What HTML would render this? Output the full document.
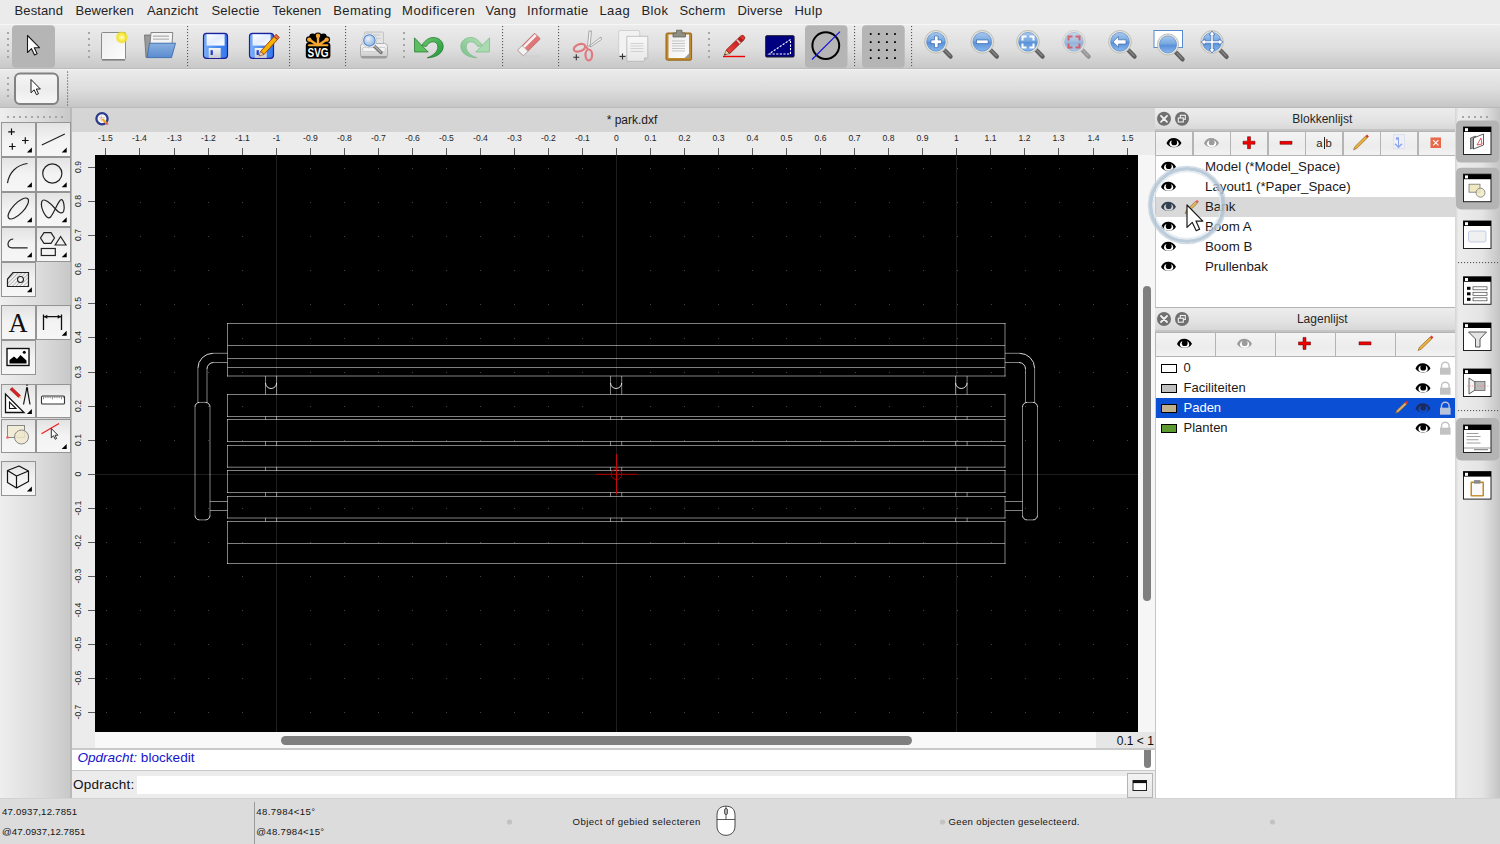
<!DOCTYPE html><html><head><meta charset="utf-8"><title>LibreCAD</title><style>
*{box-sizing:border-box}
html,body{margin:0;padding:0}
body{width:1500px;height:844px;overflow:hidden;position:relative;background:#ebebeb;font-family:"Liberation Sans",sans-serif;color:#1e1e1e}
.a{position:absolute}
.t{position:absolute;white-space:nowrap}
.menu{font-size:13px;color:#242424;top:2.8px;line-height:16px}
.rl{position:absolute;font-size:8.6px;color:#262626;white-space:nowrap;line-height:10px;text-align:center;width:30px}
.rv{position:absolute;font-size:8.6px;color:#262626;white-space:nowrap;line-height:10px;text-align:center;width:30px;transform:rotate(-90deg)}
.st{position:absolute;font-size:9.6px;color:#151515;white-space:nowrap;line-height:12px;letter-spacing:0.3px}
.row{position:absolute;font-size:13px;line-height:16px;white-space:nowrap;color:#1a1a1a}
</style></head><body>
<div class="a" style="left:0;top:0;width:1500px;height:24px;background:#ebebeb"></div>
<div class="t menu" style="left:14.6px;letter-spacing:0.1px">Bestand</div>
<div class="t menu" style="left:75.6px;letter-spacing:0.06px">Bewerken</div>
<div class="t menu" style="left:147.0px;letter-spacing:0.19px">Aanzicht</div>
<div class="t menu" style="left:211.4px;letter-spacing:0.26px">Selectie</div>
<div class="t menu" style="left:272.2px;letter-spacing:0px">Tekenen</div>
<div class="t menu" style="left:333.2px;letter-spacing:0.43px">Bemating</div>
<div class="t menu" style="left:402.0px;letter-spacing:0.55px">Modificeren</div>
<div class="t menu" style="left:485.4px;letter-spacing:0.37px">Vang</div>
<div class="t menu" style="left:527.1px;letter-spacing:0.38px">Informatie</div>
<div class="t menu" style="left:599.4px;letter-spacing:0.5px">Laag</div>
<div class="t menu" style="left:641.4px;letter-spacing:0.4px">Blok</div>
<div class="t menu" style="left:679.5px;letter-spacing:0.2px">Scherm</div>
<div class="t menu" style="left:737.4px;letter-spacing:0.18px">Diverse</div>
<div class="t menu" style="left:794.4px;letter-spacing:0.33px">Hulp</div>
<div class="a" style="left:0;top:24px;width:1500px;height:1px;background:#f6f6f6"></div>
<div class="a" style="left:0;top:25px;width:1500px;height:43px;background:linear-gradient(#ececec,#dedede 55%,#c8c8c8)"></div>
<div class="a" style="left:0;top:67.6px;width:1500px;height:1px;background:#bcbcbc"></div>
<div class="a" style="left:0;top:68.6px;width:1500px;height:1px;background:#f2f2f2"></div>
<div class="a" style="left:0;top:69.6px;width:1500px;height:37px;background:linear-gradient(#ebebeb,#dcdcdc 55%,#c6c6c6)"></div>
<div class="a" style="left:0;top:106.5px;width:1500px;height:1.5px;background:#b9b9b9"></div>
<div class="a" style="left:0;top:108px;width:71px;height:690px;background:linear-gradient(90deg,#eeeeee,#dadada 60%,#c8c8c8)"></div>
<div class="a" style="left:70px;top:108px;width:2px;height:690px;background:#b9b9b9"></div>
<div class="a" style="left:1.4px;top:121.9px;width:34.6px;height:34.8px;border:1.4px solid #949494;background:linear-gradient(#e3e3e3,#f3f3f3 50%,#f6f6f6)"></div>
<div class="a" style="left:36.2px;top:121.9px;width:34.6px;height:34.8px;border:1.4px solid #949494;background:linear-gradient(#e3e3e3,#f3f3f3 50%,#f6f6f6)"></div>
<div class="a" style="left:1.4px;top:156.8px;width:34.6px;height:34.8px;border:1.4px solid #949494;background:linear-gradient(#e3e3e3,#f3f3f3 50%,#f6f6f6)"></div>
<div class="a" style="left:36.2px;top:156.8px;width:34.6px;height:34.8px;border:1.4px solid #949494;background:linear-gradient(#e3e3e3,#f3f3f3 50%,#f6f6f6)"></div>
<div class="a" style="left:1.4px;top:191.8px;width:34.6px;height:34.8px;border:1.4px solid #949494;background:linear-gradient(#e3e3e3,#f3f3f3 50%,#f6f6f6)"></div>
<div class="a" style="left:36.2px;top:191.8px;width:34.6px;height:34.8px;border:1.4px solid #949494;background:linear-gradient(#e3e3e3,#f3f3f3 50%,#f6f6f6)"></div>
<div class="a" style="left:1.4px;top:226.8px;width:34.6px;height:34.8px;border:1.4px solid #949494;background:linear-gradient(#e3e3e3,#f3f3f3 50%,#f6f6f6)"></div>
<div class="a" style="left:36.2px;top:226.8px;width:34.6px;height:34.8px;border:1.4px solid #949494;background:linear-gradient(#e3e3e3,#f3f3f3 50%,#f6f6f6)"></div>
<div class="a" style="left:1.4px;top:261.8px;width:34.6px;height:34.8px;border:1.4px solid #949494;background:linear-gradient(#e3e3e3,#f3f3f3 50%,#f6f6f6)"></div>
<div class="a" style="left:1.4px;top:305.2px;width:34.6px;height:34.8px;border:1.4px solid #949494;background:linear-gradient(#e3e3e3,#f3f3f3 50%,#f6f6f6)"></div>
<div class="a" style="left:36.2px;top:305.2px;width:34.6px;height:34.8px;border:1.4px solid #949494;background:linear-gradient(#e3e3e3,#f3f3f3 50%,#f6f6f6)"></div>
<div class="a" style="left:1.4px;top:340.2px;width:34.6px;height:34.8px;border:1.4px solid #949494;background:linear-gradient(#e3e3e3,#f3f3f3 50%,#f6f6f6)"></div>
<div class="a" style="left:1.4px;top:383.5px;width:34.6px;height:34.8px;border:1.4px solid #949494;background:linear-gradient(#e3e3e3,#f3f3f3 50%,#f6f6f6)"></div>
<div class="a" style="left:36.2px;top:383.5px;width:34.6px;height:34.8px;border:1.4px solid #949494;background:linear-gradient(#e3e3e3,#f3f3f3 50%,#f6f6f6)"></div>
<div class="a" style="left:1.4px;top:418.5px;width:34.6px;height:34.8px;border:1.4px solid #949494;background:linear-gradient(#e3e3e3,#f3f3f3 50%,#f6f6f6)"></div>
<div class="a" style="left:36.2px;top:418.5px;width:34.6px;height:34.8px;border:1.4px solid #949494;background:linear-gradient(#e3e3e3,#f3f3f3 50%,#f6f6f6)"></div>
<div class="a" style="left:1.4px;top:461.1px;width:34.6px;height:34.8px;border:1.4px solid #949494;background:linear-gradient(#e3e3e3,#f3f3f3 50%,#f6f6f6)"></div>
<div class="a" style="left:72px;top:108px;width:1083px;height:24px;background:#d5d5d5"></div>
<div class="t" style="left:606.7px;top:112.5px;font-size:12px;line-height:14px;color:#1a1a1a">* park.dxf</div>
<div class="a" style="left:72px;top:132px;width:1083px;height:23px;background:#ececec"></div>
<div class="a" style="left:72px;top:155px;width:23px;height:592px;background:#ececec"></div>
<div class="a" style="left:95px;top:155px;width:1043px;height:577px;background:#000"></div>
<div class="a" style="left:1138px;top:155px;width:17px;height:577px;background:#f6f6f6"></div>
<div class="a" style="left:1143.3px;top:285.5px;width:7.6px;height:315px;border-radius:4px;background:#7f7f7f"></div>
<div class="a" style="left:95px;top:732px;width:1001px;height:16px;background:#f8f8f8"></div>
<div class="a" style="left:280.5px;top:735.5px;width:631px;height:9px;border-radius:5px;background:#7f7f7f"></div>
<div class="a" style="left:1096px;top:732px;width:59px;height:16px;background:#e6e6e6"></div>
<div class="t" style="left:1116.8px;top:734px;font-size:12px;line-height:15px;color:#111">0.1 &lt; 1</div>
<div class="a" style="left:72px;top:748px;width:1083px;height:2px;background:#c9c9c9"></div>
<div class="a" style="left:72px;top:750px;width:1083px;height:20px;background:#fff"></div>
<div class="a" style="left:72px;top:770px;width:1083px;height:1.2px;background:#c9c9c9"></div>
<div class="t" style="left:77.4px;top:750.3px;font-size:13.6px;line-height:16px;color:#1414cc"><i>Opdracht:</i> blockedit</div>
<div class="a" style="left:1144px;top:750px;width:7px;height:17.5px;border-radius:0 0 4px 4px;background:#808080"></div>
<div class="a" style="left:72px;top:771px;width:1083px;height:27px;background:#ececec"></div>
<div class="t" style="left:73px;top:777.3px;font-size:13.5px;line-height:16px;color:#111;letter-spacing:0.25px">Opdracht:</div>
<div class="a" style="left:137px;top:776px;width:991px;height:18px;background:#fff"></div>
<div class="a" style="left:1127px;top:772.5px;width:25.5px;height:25px;border:1px solid #b4b4b4;background:linear-gradient(#f4f4f4,#e6e6e6)"></div>
<div class="a" style="left:1154.8px;top:108px;width:1.2px;height:690px;background:#c6c6c6"></div>
<div class="a" style="left:1155px;top:108px;width:300px;height:22.5px;background:linear-gradient(#ededed,#e2e2e2 60%,#d6d6d6)"></div>
<div class="a" style="left:1155px;top:129.0px;width:300px;height:1.5px;background:#c4c4c4"></div>
<div class="t" style="left:1262.3px;width:120px;text-align:center;top:111.9px;font-size:12px;line-height:14px;color:#262626">Blokkenlijst</div>
<div class="a" style="left:1155px;top:130.5px;width:300px;height:25.5px;background:#b4b4b4"></div>
<div class="a" style="left:1156.20px;top:131.9px;width:35.90px;height:22.70px;background:linear-gradient(#f4f4f4,#ececec 60%,#f2f2f2)"></div>
<div class="a" style="left:1193.70px;top:131.9px;width:35.90px;height:22.70px;background:linear-gradient(#f4f4f4,#ececec 60%,#f2f2f2)"></div>
<div class="a" style="left:1231.20px;top:131.9px;width:35.90px;height:22.70px;background:linear-gradient(#f4f4f4,#ececec 60%,#f2f2f2)"></div>
<div class="a" style="left:1268.70px;top:131.9px;width:35.90px;height:22.70px;background:linear-gradient(#f4f4f4,#ececec 60%,#f2f2f2)"></div>
<div class="a" style="left:1306.20px;top:131.9px;width:35.90px;height:22.70px;background:linear-gradient(#f4f4f4,#ececec 60%,#f2f2f2)"></div>
<div class="a" style="left:1343.70px;top:131.9px;width:35.90px;height:22.70px;background:linear-gradient(#f4f4f4,#ececec 60%,#f2f2f2)"></div>
<div class="a" style="left:1381.20px;top:131.9px;width:35.90px;height:22.70px;background:linear-gradient(#f4f4f4,#ececec 60%,#f2f2f2)"></div>
<div class="a" style="left:1418.70px;top:131.9px;width:35.90px;height:22.70px;background:linear-gradient(#f4f4f4,#ececec 60%,#f2f2f2)"></div>
<div class="a" style="left:1156px;top:156px;width:299px;height:151px;background:#fff"></div>
<div class="t" style="left:1316.3px;top:136.1px;font-size:11.3px;line-height:14px;color:#222">a<span style="display:inline-block;width:1px;height:12px;background:#222;margin:0 1px;vertical-align:-2px"></span>b</div>
<div class="a" style="left:1155.5px;top:196.8px;width:299px;height:19.8px;background:#d9d9d9"></div>
<div class="row" style="left:1205px;top:158.9px;font-size:13.3px">Model (*Model_Space)</div>
<div class="row" style="left:1205px;top:178.9px;font-size:13.3px">Layout1 (*Paper_Space)</div>
<div class="row" style="left:1205px;top:198.9px;font-size:13.3px">Bank</div>
<div class="row" style="left:1205px;top:218.9px;font-size:13.3px">Boom A</div>
<div class="row" style="left:1205px;top:238.9px;font-size:13.3px">Boom B</div>
<div class="row" style="left:1205px;top:258.9px;font-size:13.3px">Prullenbak</div>
<div class="a" style="left:1155px;top:306.8px;width:300px;height:1.4px;background:#b4b4b4"></div>
<div class="a" style="left:1155px;top:308.2px;width:300px;height:23.3px;background:linear-gradient(#ededed,#e2e2e2 60%,#d6d6d6)"></div>
<div class="a" style="left:1155px;top:330.0px;width:300px;height:1.5px;background:#c4c4c4"></div>
<div class="t" style="left:1262.3px;width:120px;text-align:center;top:312.09999999999997px;font-size:12px;line-height:14px;color:#262626">Lagenlijst</div>
<div class="a" style="left:1155px;top:331.5px;width:300px;height:25.5px;background:#b4b4b4"></div>
<div class="a" style="left:1156.20px;top:332.9px;width:58.40px;height:22.70px;background:linear-gradient(#f4f4f4,#ececec 60%,#f2f2f2)"></div>
<div class="a" style="left:1216.20px;top:332.9px;width:58.40px;height:22.70px;background:linear-gradient(#f4f4f4,#ececec 60%,#f2f2f2)"></div>
<div class="a" style="left:1276.20px;top:332.9px;width:58.40px;height:22.70px;background:linear-gradient(#f4f4f4,#ececec 60%,#f2f2f2)"></div>
<div class="a" style="left:1336.20px;top:332.9px;width:58.40px;height:22.70px;background:linear-gradient(#f4f4f4,#ececec 60%,#f2f2f2)"></div>
<div class="a" style="left:1396.20px;top:332.9px;width:58.40px;height:22.70px;background:linear-gradient(#f4f4f4,#ececec 60%,#f2f2f2)"></div>
<div class="a" style="left:1156px;top:357px;width:299px;height:441px;background:#fff"></div>
<div class="a" style="left:1155.5px;top:398px;width:299px;height:19.8px;background:#0b4fd5"></div>
<div class="row" style="left:1183.5px;top:359.5px;color:#1a1a1a">0</div>
<div class="row" style="left:1183.5px;top:379.5px;color:#1a1a1a">Faciliteiten</div>
<div class="row" style="left:1183.5px;top:399.5px;color:#fff">Paden</div>
<div class="row" style="left:1183.5px;top:419.5px;color:#1a1a1a">Planten</div>
<div class="a" style="left:1455px;top:108px;width:45px;height:690px;background:linear-gradient(90deg,#d4d4d4,#ececec 8%,#e4e4e4 60%,#c4c4c4)"></div>
<div class="a" style="left:0;top:798px;width:1500px;height:46px;background:#dcdcdc"></div>
<div class="a" style="left:0;top:797.5px;width:1500px;height:1px;background:#d2d2d2"></div>
<div class="st" style="left:2px;top:805.6px;letter-spacing:0.22px">47.0937,12.7851</div>
<div class="st" style="left:2px;top:825.6px;letter-spacing:0.1px">@47.0937,12.7851</div>
<div class="a" style="left:253.5px;top:802px;width:1px;height:42px;background:#9a9a9a"></div>
<div class="st" style="left:256.3px;top:805.6px;letter-spacing:0.4px">48.7984&lt;15°</div>
<div class="st" style="left:256.3px;top:825.6px;letter-spacing:0.3px">@48.7984&lt;15°</div>
<div class="st" style="left:572.5px;top:816.3px;letter-spacing:0.42px">Object of gebied selecteren</div>
<div class="st" style="left:948.5px;top:816.3px;letter-spacing:0.32px">Geen objecten geselecteerd.</div>
<svg class="a" style="left:0;top:0" width="1500" height="844" viewBox="0 0 1500 844"><g><rect x="106" y="712" width="1" height="1" fill="#464646"/><rect x="106" y="678" width="1" height="1" fill="#464646"/><rect x="106" y="644" width="1" height="1" fill="#464646"/><rect x="106" y="610" width="1" height="1" fill="#464646"/><rect x="106" y="576" width="1" height="1" fill="#464646"/><rect x="106" y="542" width="1" height="1" fill="#464646"/><rect x="106" y="508" width="1" height="1" fill="#464646"/><rect x="106" y="474" width="1" height="1" fill="#464646"/><rect x="106" y="440" width="1" height="1" fill="#464646"/><rect x="106" y="406" width="1" height="1" fill="#464646"/><rect x="106" y="372" width="1" height="1" fill="#464646"/><rect x="106" y="338" width="1" height="1" fill="#464646"/><rect x="106" y="304" width="1" height="1" fill="#464646"/><rect x="106" y="270" width="1" height="1" fill="#464646"/><rect x="106" y="236" width="1" height="1" fill="#464646"/><rect x="106" y="202" width="1" height="1" fill="#464646"/><rect x="106" y="168" width="1" height="1" fill="#464646"/><rect x="140" y="712" width="1" height="1" fill="#464646"/><rect x="140" y="678" width="1" height="1" fill="#464646"/><rect x="140" y="644" width="1" height="1" fill="#464646"/><rect x="140" y="610" width="1" height="1" fill="#464646"/><rect x="140" y="576" width="1" height="1" fill="#464646"/><rect x="140" y="542" width="1" height="1" fill="#464646"/><rect x="140" y="508" width="1" height="1" fill="#464646"/><rect x="140" y="474" width="1" height="1" fill="#464646"/><rect x="140" y="440" width="1" height="1" fill="#464646"/><rect x="140" y="406" width="1" height="1" fill="#464646"/><rect x="140" y="372" width="1" height="1" fill="#464646"/><rect x="140" y="338" width="1" height="1" fill="#464646"/><rect x="140" y="304" width="1" height="1" fill="#464646"/><rect x="140" y="270" width="1" height="1" fill="#464646"/><rect x="140" y="236" width="1" height="1" fill="#464646"/><rect x="140" y="202" width="1" height="1" fill="#464646"/><rect x="140" y="168" width="1" height="1" fill="#464646"/><rect x="174" y="712" width="1" height="1" fill="#464646"/><rect x="174" y="678" width="1" height="1" fill="#464646"/><rect x="174" y="644" width="1" height="1" fill="#464646"/><rect x="174" y="610" width="1" height="1" fill="#464646"/><rect x="174" y="576" width="1" height="1" fill="#464646"/><rect x="174" y="542" width="1" height="1" fill="#464646"/><rect x="174" y="508" width="1" height="1" fill="#464646"/><rect x="174" y="474" width="1" height="1" fill="#464646"/><rect x="174" y="440" width="1" height="1" fill="#464646"/><rect x="174" y="406" width="1" height="1" fill="#464646"/><rect x="174" y="372" width="1" height="1" fill="#464646"/><rect x="174" y="338" width="1" height="1" fill="#464646"/><rect x="174" y="304" width="1" height="1" fill="#464646"/><rect x="174" y="270" width="1" height="1" fill="#464646"/><rect x="174" y="236" width="1" height="1" fill="#464646"/><rect x="174" y="202" width="1" height="1" fill="#464646"/><rect x="174" y="168" width="1" height="1" fill="#464646"/><rect x="208" y="712" width="1" height="1" fill="#464646"/><rect x="208" y="678" width="1" height="1" fill="#464646"/><rect x="208" y="644" width="1" height="1" fill="#464646"/><rect x="208" y="610" width="1" height="1" fill="#464646"/><rect x="208" y="576" width="1" height="1" fill="#464646"/><rect x="208" y="542" width="1" height="1" fill="#464646"/><rect x="208" y="508" width="1" height="1" fill="#464646"/><rect x="208" y="474" width="1" height="1" fill="#464646"/><rect x="208" y="440" width="1" height="1" fill="#464646"/><rect x="208" y="406" width="1" height="1" fill="#464646"/><rect x="208" y="372" width="1" height="1" fill="#464646"/><rect x="208" y="338" width="1" height="1" fill="#464646"/><rect x="208" y="304" width="1" height="1" fill="#464646"/><rect x="208" y="270" width="1" height="1" fill="#464646"/><rect x="208" y="236" width="1" height="1" fill="#464646"/><rect x="208" y="202" width="1" height="1" fill="#464646"/><rect x="208" y="168" width="1" height="1" fill="#464646"/><rect x="242" y="712" width="1" height="1" fill="#464646"/><rect x="242" y="678" width="1" height="1" fill="#464646"/><rect x="242" y="644" width="1" height="1" fill="#464646"/><rect x="242" y="610" width="1" height="1" fill="#464646"/><rect x="242" y="576" width="1" height="1" fill="#464646"/><rect x="242" y="542" width="1" height="1" fill="#464646"/><rect x="242" y="508" width="1" height="1" fill="#464646"/><rect x="242" y="474" width="1" height="1" fill="#464646"/><rect x="242" y="440" width="1" height="1" fill="#464646"/><rect x="242" y="406" width="1" height="1" fill="#464646"/><rect x="242" y="372" width="1" height="1" fill="#464646"/><rect x="242" y="338" width="1" height="1" fill="#464646"/><rect x="242" y="304" width="1" height="1" fill="#464646"/><rect x="242" y="270" width="1" height="1" fill="#464646"/><rect x="242" y="236" width="1" height="1" fill="#464646"/><rect x="242" y="202" width="1" height="1" fill="#464646"/><rect x="242" y="168" width="1" height="1" fill="#464646"/><rect x="276" y="712" width="1" height="1" fill="#464646"/><rect x="276" y="678" width="1" height="1" fill="#464646"/><rect x="276" y="644" width="1" height="1" fill="#464646"/><rect x="276" y="610" width="1" height="1" fill="#464646"/><rect x="276" y="576" width="1" height="1" fill="#464646"/><rect x="276" y="542" width="1" height="1" fill="#464646"/><rect x="276" y="508" width="1" height="1" fill="#464646"/><rect x="276" y="474" width="1" height="1" fill="#464646"/><rect x="276" y="440" width="1" height="1" fill="#464646"/><rect x="276" y="406" width="1" height="1" fill="#464646"/><rect x="276" y="372" width="1" height="1" fill="#464646"/><rect x="276" y="338" width="1" height="1" fill="#464646"/><rect x="276" y="304" width="1" height="1" fill="#464646"/><rect x="276" y="270" width="1" height="1" fill="#464646"/><rect x="276" y="236" width="1" height="1" fill="#464646"/><rect x="276" y="202" width="1" height="1" fill="#464646"/><rect x="276" y="168" width="1" height="1" fill="#464646"/><rect x="310" y="712" width="1" height="1" fill="#464646"/><rect x="310" y="678" width="1" height="1" fill="#464646"/><rect x="310" y="644" width="1" height="1" fill="#464646"/><rect x="310" y="610" width="1" height="1" fill="#464646"/><rect x="310" y="576" width="1" height="1" fill="#464646"/><rect x="310" y="542" width="1" height="1" fill="#464646"/><rect x="310" y="508" width="1" height="1" fill="#464646"/><rect x="310" y="474" width="1" height="1" fill="#464646"/><rect x="310" y="440" width="1" height="1" fill="#464646"/><rect x="310" y="406" width="1" height="1" fill="#464646"/><rect x="310" y="372" width="1" height="1" fill="#464646"/><rect x="310" y="338" width="1" height="1" fill="#464646"/><rect x="310" y="304" width="1" height="1" fill="#464646"/><rect x="310" y="270" width="1" height="1" fill="#464646"/><rect x="310" y="236" width="1" height="1" fill="#464646"/><rect x="310" y="202" width="1" height="1" fill="#464646"/><rect x="310" y="168" width="1" height="1" fill="#464646"/><rect x="344" y="712" width="1" height="1" fill="#464646"/><rect x="344" y="678" width="1" height="1" fill="#464646"/><rect x="344" y="644" width="1" height="1" fill="#464646"/><rect x="344" y="610" width="1" height="1" fill="#464646"/><rect x="344" y="576" width="1" height="1" fill="#464646"/><rect x="344" y="542" width="1" height="1" fill="#464646"/><rect x="344" y="508" width="1" height="1" fill="#464646"/><rect x="344" y="474" width="1" height="1" fill="#464646"/><rect x="344" y="440" width="1" height="1" fill="#464646"/><rect x="344" y="406" width="1" height="1" fill="#464646"/><rect x="344" y="372" width="1" height="1" fill="#464646"/><rect x="344" y="338" width="1" height="1" fill="#464646"/><rect x="344" y="304" width="1" height="1" fill="#464646"/><rect x="344" y="270" width="1" height="1" fill="#464646"/><rect x="344" y="236" width="1" height="1" fill="#464646"/><rect x="344" y="202" width="1" height="1" fill="#464646"/><rect x="344" y="168" width="1" height="1" fill="#464646"/><rect x="378" y="712" width="1" height="1" fill="#464646"/><rect x="378" y="678" width="1" height="1" fill="#464646"/><rect x="378" y="644" width="1" height="1" fill="#464646"/><rect x="378" y="610" width="1" height="1" fill="#464646"/><rect x="378" y="576" width="1" height="1" fill="#464646"/><rect x="378" y="542" width="1" height="1" fill="#464646"/><rect x="378" y="508" width="1" height="1" fill="#464646"/><rect x="378" y="474" width="1" height="1" fill="#464646"/><rect x="378" y="440" width="1" height="1" fill="#464646"/><rect x="378" y="406" width="1" height="1" fill="#464646"/><rect x="378" y="372" width="1" height="1" fill="#464646"/><rect x="378" y="338" width="1" height="1" fill="#464646"/><rect x="378" y="304" width="1" height="1" fill="#464646"/><rect x="378" y="270" width="1" height="1" fill="#464646"/><rect x="378" y="236" width="1" height="1" fill="#464646"/><rect x="378" y="202" width="1" height="1" fill="#464646"/><rect x="378" y="168" width="1" height="1" fill="#464646"/><rect x="412" y="712" width="1" height="1" fill="#464646"/><rect x="412" y="678" width="1" height="1" fill="#464646"/><rect x="412" y="644" width="1" height="1" fill="#464646"/><rect x="412" y="610" width="1" height="1" fill="#464646"/><rect x="412" y="576" width="1" height="1" fill="#464646"/><rect x="412" y="542" width="1" height="1" fill="#464646"/><rect x="412" y="508" width="1" height="1" fill="#464646"/><rect x="412" y="474" width="1" height="1" fill="#464646"/><rect x="412" y="440" width="1" height="1" fill="#464646"/><rect x="412" y="406" width="1" height="1" fill="#464646"/><rect x="412" y="372" width="1" height="1" fill="#464646"/><rect x="412" y="338" width="1" height="1" fill="#464646"/><rect x="412" y="304" width="1" height="1" fill="#464646"/><rect x="412" y="270" width="1" height="1" fill="#464646"/><rect x="412" y="236" width="1" height="1" fill="#464646"/><rect x="412" y="202" width="1" height="1" fill="#464646"/><rect x="412" y="168" width="1" height="1" fill="#464646"/><rect x="446" y="712" width="1" height="1" fill="#464646"/><rect x="446" y="678" width="1" height="1" fill="#464646"/><rect x="446" y="644" width="1" height="1" fill="#464646"/><rect x="446" y="610" width="1" height="1" fill="#464646"/><rect x="446" y="576" width="1" height="1" fill="#464646"/><rect x="446" y="542" width="1" height="1" fill="#464646"/><rect x="446" y="508" width="1" height="1" fill="#464646"/><rect x="446" y="474" width="1" height="1" fill="#464646"/><rect x="446" y="440" width="1" height="1" fill="#464646"/><rect x="446" y="406" width="1" height="1" fill="#464646"/><rect x="446" y="372" width="1" height="1" fill="#464646"/><rect x="446" y="338" width="1" height="1" fill="#464646"/><rect x="446" y="304" width="1" height="1" fill="#464646"/><rect x="446" y="270" width="1" height="1" fill="#464646"/><rect x="446" y="236" width="1" height="1" fill="#464646"/><rect x="446" y="202" width="1" height="1" fill="#464646"/><rect x="446" y="168" width="1" height="1" fill="#464646"/><rect x="480" y="712" width="1" height="1" fill="#464646"/><rect x="480" y="678" width="1" height="1" fill="#464646"/><rect x="480" y="644" width="1" height="1" fill="#464646"/><rect x="480" y="610" width="1" height="1" fill="#464646"/><rect x="480" y="576" width="1" height="1" fill="#464646"/><rect x="480" y="542" width="1" height="1" fill="#464646"/><rect x="480" y="508" width="1" height="1" fill="#464646"/><rect x="480" y="474" width="1" height="1" fill="#464646"/><rect x="480" y="440" width="1" height="1" fill="#464646"/><rect x="480" y="406" width="1" height="1" fill="#464646"/><rect x="480" y="372" width="1" height="1" fill="#464646"/><rect x="480" y="338" width="1" height="1" fill="#464646"/><rect x="480" y="304" width="1" height="1" fill="#464646"/><rect x="480" y="270" width="1" height="1" fill="#464646"/><rect x="480" y="236" width="1" height="1" fill="#464646"/><rect x="480" y="202" width="1" height="1" fill="#464646"/><rect x="480" y="168" width="1" height="1" fill="#464646"/><rect x="514" y="712" width="1" height="1" fill="#464646"/><rect x="514" y="678" width="1" height="1" fill="#464646"/><rect x="514" y="644" width="1" height="1" fill="#464646"/><rect x="514" y="610" width="1" height="1" fill="#464646"/><rect x="514" y="576" width="1" height="1" fill="#464646"/><rect x="514" y="542" width="1" height="1" fill="#464646"/><rect x="514" y="508" width="1" height="1" fill="#464646"/><rect x="514" y="474" width="1" height="1" fill="#464646"/><rect x="514" y="440" width="1" height="1" fill="#464646"/><rect x="514" y="406" width="1" height="1" fill="#464646"/><rect x="514" y="372" width="1" height="1" fill="#464646"/><rect x="514" y="338" width="1" height="1" fill="#464646"/><rect x="514" y="304" width="1" height="1" fill="#464646"/><rect x="514" y="270" width="1" height="1" fill="#464646"/><rect x="514" y="236" width="1" height="1" fill="#464646"/><rect x="514" y="202" width="1" height="1" fill="#464646"/><rect x="514" y="168" width="1" height="1" fill="#464646"/><rect x="548" y="712" width="1" height="1" fill="#464646"/><rect x="548" y="678" width="1" height="1" fill="#464646"/><rect x="548" y="644" width="1" height="1" fill="#464646"/><rect x="548" y="610" width="1" height="1" fill="#464646"/><rect x="548" y="576" width="1" height="1" fill="#464646"/><rect x="548" y="542" width="1" height="1" fill="#464646"/><rect x="548" y="508" width="1" height="1" fill="#464646"/><rect x="548" y="474" width="1" height="1" fill="#464646"/><rect x="548" y="440" width="1" height="1" fill="#464646"/><rect x="548" y="406" width="1" height="1" fill="#464646"/><rect x="548" y="372" width="1" height="1" fill="#464646"/><rect x="548" y="338" width="1" height="1" fill="#464646"/><rect x="548" y="304" width="1" height="1" fill="#464646"/><rect x="548" y="270" width="1" height="1" fill="#464646"/><rect x="548" y="236" width="1" height="1" fill="#464646"/><rect x="548" y="202" width="1" height="1" fill="#464646"/><rect x="548" y="168" width="1" height="1" fill="#464646"/><rect x="582" y="712" width="1" height="1" fill="#464646"/><rect x="582" y="678" width="1" height="1" fill="#464646"/><rect x="582" y="644" width="1" height="1" fill="#464646"/><rect x="582" y="610" width="1" height="1" fill="#464646"/><rect x="582" y="576" width="1" height="1" fill="#464646"/><rect x="582" y="542" width="1" height="1" fill="#464646"/><rect x="582" y="508" width="1" height="1" fill="#464646"/><rect x="582" y="474" width="1" height="1" fill="#464646"/><rect x="582" y="440" width="1" height="1" fill="#464646"/><rect x="582" y="406" width="1" height="1" fill="#464646"/><rect x="582" y="372" width="1" height="1" fill="#464646"/><rect x="582" y="338" width="1" height="1" fill="#464646"/><rect x="582" y="304" width="1" height="1" fill="#464646"/><rect x="582" y="270" width="1" height="1" fill="#464646"/><rect x="582" y="236" width="1" height="1" fill="#464646"/><rect x="582" y="202" width="1" height="1" fill="#464646"/><rect x="582" y="168" width="1" height="1" fill="#464646"/><rect x="616" y="712" width="1" height="1" fill="#464646"/><rect x="616" y="678" width="1" height="1" fill="#464646"/><rect x="616" y="644" width="1" height="1" fill="#464646"/><rect x="616" y="610" width="1" height="1" fill="#464646"/><rect x="616" y="576" width="1" height="1" fill="#464646"/><rect x="616" y="542" width="1" height="1" fill="#464646"/><rect x="616" y="508" width="1" height="1" fill="#464646"/><rect x="616" y="474" width="1" height="1" fill="#464646"/><rect x="616" y="440" width="1" height="1" fill="#464646"/><rect x="616" y="406" width="1" height="1" fill="#464646"/><rect x="616" y="372" width="1" height="1" fill="#464646"/><rect x="616" y="338" width="1" height="1" fill="#464646"/><rect x="616" y="304" width="1" height="1" fill="#464646"/><rect x="616" y="270" width="1" height="1" fill="#464646"/><rect x="616" y="236" width="1" height="1" fill="#464646"/><rect x="616" y="202" width="1" height="1" fill="#464646"/><rect x="616" y="168" width="1" height="1" fill="#464646"/><rect x="650" y="712" width="1" height="1" fill="#464646"/><rect x="650" y="678" width="1" height="1" fill="#464646"/><rect x="650" y="644" width="1" height="1" fill="#464646"/><rect x="650" y="610" width="1" height="1" fill="#464646"/><rect x="650" y="576" width="1" height="1" fill="#464646"/><rect x="650" y="542" width="1" height="1" fill="#464646"/><rect x="650" y="508" width="1" height="1" fill="#464646"/><rect x="650" y="474" width="1" height="1" fill="#464646"/><rect x="650" y="440" width="1" height="1" fill="#464646"/><rect x="650" y="406" width="1" height="1" fill="#464646"/><rect x="650" y="372" width="1" height="1" fill="#464646"/><rect x="650" y="338" width="1" height="1" fill="#464646"/><rect x="650" y="304" width="1" height="1" fill="#464646"/><rect x="650" y="270" width="1" height="1" fill="#464646"/><rect x="650" y="236" width="1" height="1" fill="#464646"/><rect x="650" y="202" width="1" height="1" fill="#464646"/><rect x="650" y="168" width="1" height="1" fill="#464646"/><rect x="684" y="712" width="1" height="1" fill="#464646"/><rect x="684" y="678" width="1" height="1" fill="#464646"/><rect x="684" y="644" width="1" height="1" fill="#464646"/><rect x="684" y="610" width="1" height="1" fill="#464646"/><rect x="684" y="576" width="1" height="1" fill="#464646"/><rect x="684" y="542" width="1" height="1" fill="#464646"/><rect x="684" y="508" width="1" height="1" fill="#464646"/><rect x="684" y="474" width="1" height="1" fill="#464646"/><rect x="684" y="440" width="1" height="1" fill="#464646"/><rect x="684" y="406" width="1" height="1" fill="#464646"/><rect x="684" y="372" width="1" height="1" fill="#464646"/><rect x="684" y="338" width="1" height="1" fill="#464646"/><rect x="684" y="304" width="1" height="1" fill="#464646"/><rect x="684" y="270" width="1" height="1" fill="#464646"/><rect x="684" y="236" width="1" height="1" fill="#464646"/><rect x="684" y="202" width="1" height="1" fill="#464646"/><rect x="684" y="168" width="1" height="1" fill="#464646"/><rect x="718" y="712" width="1" height="1" fill="#464646"/><rect x="718" y="678" width="1" height="1" fill="#464646"/><rect x="718" y="644" width="1" height="1" fill="#464646"/><rect x="718" y="610" width="1" height="1" fill="#464646"/><rect x="718" y="576" width="1" height="1" fill="#464646"/><rect x="718" y="542" width="1" height="1" fill="#464646"/><rect x="718" y="508" width="1" height="1" fill="#464646"/><rect x="718" y="474" width="1" height="1" fill="#464646"/><rect x="718" y="440" width="1" height="1" fill="#464646"/><rect x="718" y="406" width="1" height="1" fill="#464646"/><rect x="718" y="372" width="1" height="1" fill="#464646"/><rect x="718" y="338" width="1" height="1" fill="#464646"/><rect x="718" y="304" width="1" height="1" fill="#464646"/><rect x="718" y="270" width="1" height="1" fill="#464646"/><rect x="718" y="236" width="1" height="1" fill="#464646"/><rect x="718" y="202" width="1" height="1" fill="#464646"/><rect x="718" y="168" width="1" height="1" fill="#464646"/><rect x="752" y="712" width="1" height="1" fill="#464646"/><rect x="752" y="678" width="1" height="1" fill="#464646"/><rect x="752" y="644" width="1" height="1" fill="#464646"/><rect x="752" y="610" width="1" height="1" fill="#464646"/><rect x="752" y="576" width="1" height="1" fill="#464646"/><rect x="752" y="542" width="1" height="1" fill="#464646"/><rect x="752" y="508" width="1" height="1" fill="#464646"/><rect x="752" y="474" width="1" height="1" fill="#464646"/><rect x="752" y="440" width="1" height="1" fill="#464646"/><rect x="752" y="406" width="1" height="1" fill="#464646"/><rect x="752" y="372" width="1" height="1" fill="#464646"/><rect x="752" y="338" width="1" height="1" fill="#464646"/><rect x="752" y="304" width="1" height="1" fill="#464646"/><rect x="752" y="270" width="1" height="1" fill="#464646"/><rect x="752" y="236" width="1" height="1" fill="#464646"/><rect x="752" y="202" width="1" height="1" fill="#464646"/><rect x="752" y="168" width="1" height="1" fill="#464646"/><rect x="786" y="712" width="1" height="1" fill="#464646"/><rect x="786" y="678" width="1" height="1" fill="#464646"/><rect x="786" y="644" width="1" height="1" fill="#464646"/><rect x="786" y="610" width="1" height="1" fill="#464646"/><rect x="786" y="576" width="1" height="1" fill="#464646"/><rect x="786" y="542" width="1" height="1" fill="#464646"/><rect x="786" y="508" width="1" height="1" fill="#464646"/><rect x="786" y="474" width="1" height="1" fill="#464646"/><rect x="786" y="440" width="1" height="1" fill="#464646"/><rect x="786" y="406" width="1" height="1" fill="#464646"/><rect x="786" y="372" width="1" height="1" fill="#464646"/><rect x="786" y="338" width="1" height="1" fill="#464646"/><rect x="786" y="304" width="1" height="1" fill="#464646"/><rect x="786" y="270" width="1" height="1" fill="#464646"/><rect x="786" y="236" width="1" height="1" fill="#464646"/><rect x="786" y="202" width="1" height="1" fill="#464646"/><rect x="786" y="168" width="1" height="1" fill="#464646"/><rect x="820" y="712" width="1" height="1" fill="#464646"/><rect x="820" y="678" width="1" height="1" fill="#464646"/><rect x="820" y="644" width="1" height="1" fill="#464646"/><rect x="820" y="610" width="1" height="1" fill="#464646"/><rect x="820" y="576" width="1" height="1" fill="#464646"/><rect x="820" y="542" width="1" height="1" fill="#464646"/><rect x="820" y="508" width="1" height="1" fill="#464646"/><rect x="820" y="474" width="1" height="1" fill="#464646"/><rect x="820" y="440" width="1" height="1" fill="#464646"/><rect x="820" y="406" width="1" height="1" fill="#464646"/><rect x="820" y="372" width="1" height="1" fill="#464646"/><rect x="820" y="338" width="1" height="1" fill="#464646"/><rect x="820" y="304" width="1" height="1" fill="#464646"/><rect x="820" y="270" width="1" height="1" fill="#464646"/><rect x="820" y="236" width="1" height="1" fill="#464646"/><rect x="820" y="202" width="1" height="1" fill="#464646"/><rect x="820" y="168" width="1" height="1" fill="#464646"/><rect x="855" y="712" width="1" height="1" fill="#464646"/><rect x="855" y="678" width="1" height="1" fill="#464646"/><rect x="855" y="644" width="1" height="1" fill="#464646"/><rect x="855" y="610" width="1" height="1" fill="#464646"/><rect x="855" y="576" width="1" height="1" fill="#464646"/><rect x="855" y="542" width="1" height="1" fill="#464646"/><rect x="855" y="508" width="1" height="1" fill="#464646"/><rect x="855" y="474" width="1" height="1" fill="#464646"/><rect x="855" y="440" width="1" height="1" fill="#464646"/><rect x="855" y="406" width="1" height="1" fill="#464646"/><rect x="855" y="372" width="1" height="1" fill="#464646"/><rect x="855" y="338" width="1" height="1" fill="#464646"/><rect x="855" y="304" width="1" height="1" fill="#464646"/><rect x="855" y="270" width="1" height="1" fill="#464646"/><rect x="855" y="236" width="1" height="1" fill="#464646"/><rect x="855" y="202" width="1" height="1" fill="#464646"/><rect x="855" y="168" width="1" height="1" fill="#464646"/><rect x="889" y="712" width="1" height="1" fill="#464646"/><rect x="889" y="678" width="1" height="1" fill="#464646"/><rect x="889" y="644" width="1" height="1" fill="#464646"/><rect x="889" y="610" width="1" height="1" fill="#464646"/><rect x="889" y="576" width="1" height="1" fill="#464646"/><rect x="889" y="542" width="1" height="1" fill="#464646"/><rect x="889" y="508" width="1" height="1" fill="#464646"/><rect x="889" y="474" width="1" height="1" fill="#464646"/><rect x="889" y="440" width="1" height="1" fill="#464646"/><rect x="889" y="406" width="1" height="1" fill="#464646"/><rect x="889" y="372" width="1" height="1" fill="#464646"/><rect x="889" y="338" width="1" height="1" fill="#464646"/><rect x="889" y="304" width="1" height="1" fill="#464646"/><rect x="889" y="270" width="1" height="1" fill="#464646"/><rect x="889" y="236" width="1" height="1" fill="#464646"/><rect x="889" y="202" width="1" height="1" fill="#464646"/><rect x="889" y="168" width="1" height="1" fill="#464646"/><rect x="923" y="712" width="1" height="1" fill="#464646"/><rect x="923" y="678" width="1" height="1" fill="#464646"/><rect x="923" y="644" width="1" height="1" fill="#464646"/><rect x="923" y="610" width="1" height="1" fill="#464646"/><rect x="923" y="576" width="1" height="1" fill="#464646"/><rect x="923" y="542" width="1" height="1" fill="#464646"/><rect x="923" y="508" width="1" height="1" fill="#464646"/><rect x="923" y="474" width="1" height="1" fill="#464646"/><rect x="923" y="440" width="1" height="1" fill="#464646"/><rect x="923" y="406" width="1" height="1" fill="#464646"/><rect x="923" y="372" width="1" height="1" fill="#464646"/><rect x="923" y="338" width="1" height="1" fill="#464646"/><rect x="923" y="304" width="1" height="1" fill="#464646"/><rect x="923" y="270" width="1" height="1" fill="#464646"/><rect x="923" y="236" width="1" height="1" fill="#464646"/><rect x="923" y="202" width="1" height="1" fill="#464646"/><rect x="923" y="168" width="1" height="1" fill="#464646"/><rect x="957" y="712" width="1" height="1" fill="#464646"/><rect x="957" y="678" width="1" height="1" fill="#464646"/><rect x="957" y="644" width="1" height="1" fill="#464646"/><rect x="957" y="610" width="1" height="1" fill="#464646"/><rect x="957" y="576" width="1" height="1" fill="#464646"/><rect x="957" y="542" width="1" height="1" fill="#464646"/><rect x="957" y="508" width="1" height="1" fill="#464646"/><rect x="957" y="474" width="1" height="1" fill="#464646"/><rect x="957" y="440" width="1" height="1" fill="#464646"/><rect x="957" y="406" width="1" height="1" fill="#464646"/><rect x="957" y="372" width="1" height="1" fill="#464646"/><rect x="957" y="338" width="1" height="1" fill="#464646"/><rect x="957" y="304" width="1" height="1" fill="#464646"/><rect x="957" y="270" width="1" height="1" fill="#464646"/><rect x="957" y="236" width="1" height="1" fill="#464646"/><rect x="957" y="202" width="1" height="1" fill="#464646"/><rect x="957" y="168" width="1" height="1" fill="#464646"/><rect x="991" y="712" width="1" height="1" fill="#464646"/><rect x="991" y="678" width="1" height="1" fill="#464646"/><rect x="991" y="644" width="1" height="1" fill="#464646"/><rect x="991" y="610" width="1" height="1" fill="#464646"/><rect x="991" y="576" width="1" height="1" fill="#464646"/><rect x="991" y="542" width="1" height="1" fill="#464646"/><rect x="991" y="508" width="1" height="1" fill="#464646"/><rect x="991" y="474" width="1" height="1" fill="#464646"/><rect x="991" y="440" width="1" height="1" fill="#464646"/><rect x="991" y="406" width="1" height="1" fill="#464646"/><rect x="991" y="372" width="1" height="1" fill="#464646"/><rect x="991" y="338" width="1" height="1" fill="#464646"/><rect x="991" y="304" width="1" height="1" fill="#464646"/><rect x="991" y="270" width="1" height="1" fill="#464646"/><rect x="991" y="236" width="1" height="1" fill="#464646"/><rect x="991" y="202" width="1" height="1" fill="#464646"/><rect x="991" y="168" width="1" height="1" fill="#464646"/><rect x="1025" y="712" width="1" height="1" fill="#464646"/><rect x="1025" y="678" width="1" height="1" fill="#464646"/><rect x="1025" y="644" width="1" height="1" fill="#464646"/><rect x="1025" y="610" width="1" height="1" fill="#464646"/><rect x="1025" y="576" width="1" height="1" fill="#464646"/><rect x="1025" y="542" width="1" height="1" fill="#464646"/><rect x="1025" y="508" width="1" height="1" fill="#464646"/><rect x="1025" y="474" width="1" height="1" fill="#464646"/><rect x="1025" y="440" width="1" height="1" fill="#464646"/><rect x="1025" y="406" width="1" height="1" fill="#464646"/><rect x="1025" y="372" width="1" height="1" fill="#464646"/><rect x="1025" y="338" width="1" height="1" fill="#464646"/><rect x="1025" y="304" width="1" height="1" fill="#464646"/><rect x="1025" y="270" width="1" height="1" fill="#464646"/><rect x="1025" y="236" width="1" height="1" fill="#464646"/><rect x="1025" y="202" width="1" height="1" fill="#464646"/><rect x="1025" y="168" width="1" height="1" fill="#464646"/><rect x="1059" y="712" width="1" height="1" fill="#464646"/><rect x="1059" y="678" width="1" height="1" fill="#464646"/><rect x="1059" y="644" width="1" height="1" fill="#464646"/><rect x="1059" y="610" width="1" height="1" fill="#464646"/><rect x="1059" y="576" width="1" height="1" fill="#464646"/><rect x="1059" y="542" width="1" height="1" fill="#464646"/><rect x="1059" y="508" width="1" height="1" fill="#464646"/><rect x="1059" y="474" width="1" height="1" fill="#464646"/><rect x="1059" y="440" width="1" height="1" fill="#464646"/><rect x="1059" y="406" width="1" height="1" fill="#464646"/><rect x="1059" y="372" width="1" height="1" fill="#464646"/><rect x="1059" y="338" width="1" height="1" fill="#464646"/><rect x="1059" y="304" width="1" height="1" fill="#464646"/><rect x="1059" y="270" width="1" height="1" fill="#464646"/><rect x="1059" y="236" width="1" height="1" fill="#464646"/><rect x="1059" y="202" width="1" height="1" fill="#464646"/><rect x="1059" y="168" width="1" height="1" fill="#464646"/><rect x="1093" y="712" width="1" height="1" fill="#464646"/><rect x="1093" y="678" width="1" height="1" fill="#464646"/><rect x="1093" y="644" width="1" height="1" fill="#464646"/><rect x="1093" y="610" width="1" height="1" fill="#464646"/><rect x="1093" y="576" width="1" height="1" fill="#464646"/><rect x="1093" y="542" width="1" height="1" fill="#464646"/><rect x="1093" y="508" width="1" height="1" fill="#464646"/><rect x="1093" y="474" width="1" height="1" fill="#464646"/><rect x="1093" y="440" width="1" height="1" fill="#464646"/><rect x="1093" y="406" width="1" height="1" fill="#464646"/><rect x="1093" y="372" width="1" height="1" fill="#464646"/><rect x="1093" y="338" width="1" height="1" fill="#464646"/><rect x="1093" y="304" width="1" height="1" fill="#464646"/><rect x="1093" y="270" width="1" height="1" fill="#464646"/><rect x="1093" y="236" width="1" height="1" fill="#464646"/><rect x="1093" y="202" width="1" height="1" fill="#464646"/><rect x="1093" y="168" width="1" height="1" fill="#464646"/><rect x="1127" y="712" width="1" height="1" fill="#464646"/><rect x="1127" y="678" width="1" height="1" fill="#464646"/><rect x="1127" y="644" width="1" height="1" fill="#464646"/><rect x="1127" y="610" width="1" height="1" fill="#464646"/><rect x="1127" y="576" width="1" height="1" fill="#464646"/><rect x="1127" y="542" width="1" height="1" fill="#464646"/><rect x="1127" y="508" width="1" height="1" fill="#464646"/><rect x="1127" y="474" width="1" height="1" fill="#464646"/><rect x="1127" y="440" width="1" height="1" fill="#464646"/><rect x="1127" y="406" width="1" height="1" fill="#464646"/><rect x="1127" y="372" width="1" height="1" fill="#464646"/><rect x="1127" y="338" width="1" height="1" fill="#464646"/><rect x="1127" y="304" width="1" height="1" fill="#464646"/><rect x="1127" y="270" width="1" height="1" fill="#464646"/><rect x="1127" y="236" width="1" height="1" fill="#464646"/><rect x="1127" y="202" width="1" height="1" fill="#464646"/><rect x="1127" y="168" width="1" height="1" fill="#464646"/><line x1="276.5" y1="155" x2="276.5" y2="732" stroke="#1e1e1e" stroke-width="1"/><line x1="616.5" y1="155" x2="616.5" y2="732" stroke="#1e1e1e" stroke-width="1"/><line x1="956.5" y1="155" x2="956.5" y2="732" stroke="#1e1e1e" stroke-width="1"/><line x1="95" y1="474.5" x2="1138" y2="474.5" stroke="#1e1e1e" stroke-width="1"/><line x1="227.0" y1="323.5" x2="1005.5" y2="323.5" stroke="#ffffff" stroke-opacity="0.5" stroke-width="1" fill="none"/><line x1="227.0" y1="376.0" x2="1005.5" y2="376.0" stroke="#ffffff" stroke-opacity="0.5" stroke-width="1" fill="none"/><line x1="227.5" y1="323.0" x2="227.5" y2="376.5" stroke="#ffffff" stroke-opacity="0.5" stroke-width="1" fill="none"/><line x1="1005.0" y1="323.0" x2="1005.0" y2="376.5" stroke="#ffffff" stroke-opacity="0.5" stroke-width="1" fill="none"/><line x1="227.5" y1="345.5" x2="1005.0" y2="345.5" stroke="#ffffff" stroke-opacity="0.5" stroke-width="1" fill="none"/><line x1="227.5" y1="358.5" x2="1005.0" y2="358.5" stroke="#ffffff" stroke-opacity="0.5" stroke-width="1" fill="none"/><line x1="227.5" y1="367.5" x2="1005.0" y2="367.5" stroke="#ffffff" stroke-opacity="0.5" stroke-width="1" fill="none"/><line x1="227.0" y1="394.5" x2="1005.5" y2="394.5" stroke="#ffffff" stroke-opacity="0.5" stroke-width="1" fill="none"/><line x1="227.0" y1="416.5" x2="1005.5" y2="416.5" stroke="#ffffff" stroke-opacity="0.5" stroke-width="1" fill="none"/><line x1="227.5" y1="394.0" x2="227.5" y2="417.0" stroke="#ffffff" stroke-opacity="0.5" stroke-width="1" fill="none"/><line x1="1005.0" y1="394.0" x2="1005.0" y2="417.0" stroke="#ffffff" stroke-opacity="0.5" stroke-width="1" fill="none"/><line x1="227.0" y1="419.5" x2="1005.5" y2="419.5" stroke="#ffffff" stroke-opacity="0.5" stroke-width="1" fill="none"/><line x1="227.0" y1="441.5" x2="1005.5" y2="441.5" stroke="#ffffff" stroke-opacity="0.5" stroke-width="1" fill="none"/><line x1="227.5" y1="419.0" x2="227.5" y2="442.0" stroke="#ffffff" stroke-opacity="0.5" stroke-width="1" fill="none"/><line x1="1005.0" y1="419.0" x2="1005.0" y2="442.0" stroke="#ffffff" stroke-opacity="0.5" stroke-width="1" fill="none"/><line x1="227.0" y1="445.5" x2="1005.5" y2="445.5" stroke="#ffffff" stroke-opacity="0.5" stroke-width="1" fill="none"/><line x1="227.0" y1="467.2" x2="1005.5" y2="467.2" stroke="#ffffff" stroke-opacity="0.5" stroke-width="1" fill="none"/><line x1="227.5" y1="445.0" x2="227.5" y2="467.7" stroke="#ffffff" stroke-opacity="0.5" stroke-width="1" fill="none"/><line x1="1005.0" y1="445.0" x2="1005.0" y2="467.7" stroke="#ffffff" stroke-opacity="0.5" stroke-width="1" fill="none"/><line x1="227.0" y1="470.5" x2="1005.5" y2="470.5" stroke="#ffffff" stroke-opacity="0.5" stroke-width="1" fill="none"/><line x1="227.0" y1="492.5" x2="1005.5" y2="492.5" stroke="#ffffff" stroke-opacity="0.5" stroke-width="1" fill="none"/><line x1="227.5" y1="470.0" x2="227.5" y2="493.0" stroke="#ffffff" stroke-opacity="0.5" stroke-width="1" fill="none"/><line x1="1005.0" y1="470.0" x2="1005.0" y2="493.0" stroke="#ffffff" stroke-opacity="0.5" stroke-width="1" fill="none"/><line x1="227.0" y1="496.5" x2="1005.5" y2="496.5" stroke="#ffffff" stroke-opacity="0.5" stroke-width="1" fill="none"/><line x1="227.0" y1="518.0" x2="1005.5" y2="518.0" stroke="#ffffff" stroke-opacity="0.5" stroke-width="1" fill="none"/><line x1="227.5" y1="496.0" x2="227.5" y2="518.5" stroke="#ffffff" stroke-opacity="0.5" stroke-width="1" fill="none"/><line x1="1005.0" y1="496.0" x2="1005.0" y2="518.5" stroke="#ffffff" stroke-opacity="0.5" stroke-width="1" fill="none"/><line x1="227.0" y1="521.5" x2="1005.5" y2="521.5" stroke="#ffffff" stroke-opacity="0.5" stroke-width="1" fill="none"/><line x1="227.0" y1="563.5" x2="1005.5" y2="563.5" stroke="#ffffff" stroke-opacity="0.5" stroke-width="1" fill="none"/><line x1="227.5" y1="521.0" x2="227.5" y2="564.0" stroke="#ffffff" stroke-opacity="0.5" stroke-width="1" fill="none"/><line x1="1005.0" y1="521.0" x2="1005.0" y2="564.0" stroke="#ffffff" stroke-opacity="0.5" stroke-width="1" fill="none"/><line x1="227.5" y1="543.5" x2="1005.0" y2="543.5" stroke="#ffffff" stroke-opacity="0.5" stroke-width="1" fill="none"/><line x1="265.5" y1="376.0" x2="265.5" y2="382.95" stroke="#ffffff" stroke-opacity="0.5" stroke-width="1" fill="none"/><line x1="276.6" y1="376.0" x2="276.6" y2="382.95" stroke="#ffffff" stroke-opacity="0.5" stroke-width="1" fill="none"/><path d="M265.5,382.95 A5.55,5.55 0 0 0 276.60,382.95" stroke="#ffffff" stroke-opacity="0.85" stroke-width="1" fill="none"/><line x1="265.5" y1="383" x2="265.5" y2="394.5" stroke="#ffffff" stroke-opacity="0.5" stroke-width="1" fill="none"/><line x1="276.6" y1="383" x2="276.6" y2="394.5" stroke="#ffffff" stroke-opacity="0.5" stroke-width="1" fill="none"/><line x1="265.5" y1="416.5" x2="265.5" y2="419.5" stroke="#ffffff" stroke-opacity="0.5" stroke-width="1" fill="none"/><line x1="276.6" y1="416.5" x2="276.6" y2="419.5" stroke="#ffffff" stroke-opacity="0.5" stroke-width="1" fill="none"/><line x1="265.5" y1="441.5" x2="265.5" y2="445.5" stroke="#ffffff" stroke-opacity="0.5" stroke-width="1" fill="none"/><line x1="276.6" y1="441.5" x2="276.6" y2="445.5" stroke="#ffffff" stroke-opacity="0.5" stroke-width="1" fill="none"/><line x1="265.5" y1="467.2" x2="265.5" y2="470.5" stroke="#ffffff" stroke-opacity="0.5" stroke-width="1" fill="none"/><line x1="276.6" y1="467.2" x2="276.6" y2="470.5" stroke="#ffffff" stroke-opacity="0.5" stroke-width="1" fill="none"/><line x1="265.5" y1="492.5" x2="265.5" y2="496.5" stroke="#ffffff" stroke-opacity="0.5" stroke-width="1" fill="none"/><line x1="276.6" y1="492.5" x2="276.6" y2="496.5" stroke="#ffffff" stroke-opacity="0.5" stroke-width="1" fill="none"/><line x1="265.5" y1="518.0" x2="265.5" y2="521.5" stroke="#ffffff" stroke-opacity="0.5" stroke-width="1" fill="none"/><line x1="276.6" y1="518.0" x2="276.6" y2="521.5" stroke="#ffffff" stroke-opacity="0.5" stroke-width="1" fill="none"/><line x1="610.5" y1="376.0" x2="610.5" y2="382.9" stroke="#ffffff" stroke-opacity="0.5" stroke-width="1" fill="none"/><line x1="621.7" y1="376.0" x2="621.7" y2="382.9" stroke="#ffffff" stroke-opacity="0.5" stroke-width="1" fill="none"/><path d="M610.5,382.90 A5.60,5.60 0 0 0 621.70,382.90" stroke="#ffffff" stroke-opacity="0.85" stroke-width="1" fill="none"/><line x1="610.5" y1="383" x2="610.5" y2="394.5" stroke="#ffffff" stroke-opacity="0.5" stroke-width="1" fill="none"/><line x1="621.7" y1="383" x2="621.7" y2="394.5" stroke="#ffffff" stroke-opacity="0.5" stroke-width="1" fill="none"/><line x1="610.5" y1="416.5" x2="610.5" y2="419.5" stroke="#ffffff" stroke-opacity="0.5" stroke-width="1" fill="none"/><line x1="621.7" y1="416.5" x2="621.7" y2="419.5" stroke="#ffffff" stroke-opacity="0.5" stroke-width="1" fill="none"/><line x1="610.5" y1="441.5" x2="610.5" y2="445.5" stroke="#ffffff" stroke-opacity="0.5" stroke-width="1" fill="none"/><line x1="621.7" y1="441.5" x2="621.7" y2="445.5" stroke="#ffffff" stroke-opacity="0.5" stroke-width="1" fill="none"/><line x1="610.5" y1="467.2" x2="610.5" y2="470.5" stroke="#ffffff" stroke-opacity="0.5" stroke-width="1" fill="none"/><line x1="621.7" y1="467.2" x2="621.7" y2="470.5" stroke="#ffffff" stroke-opacity="0.5" stroke-width="1" fill="none"/><line x1="610.5" y1="492.5" x2="610.5" y2="496.5" stroke="#ffffff" stroke-opacity="0.5" stroke-width="1" fill="none"/><line x1="621.7" y1="492.5" x2="621.7" y2="496.5" stroke="#ffffff" stroke-opacity="0.5" stroke-width="1" fill="none"/><line x1="610.5" y1="518.0" x2="610.5" y2="521.5" stroke="#ffffff" stroke-opacity="0.5" stroke-width="1" fill="none"/><line x1="621.7" y1="518.0" x2="621.7" y2="521.5" stroke="#ffffff" stroke-opacity="0.5" stroke-width="1" fill="none"/><line x1="955.5" y1="376.0" x2="955.5" y2="382.7" stroke="#ffffff" stroke-opacity="0.5" stroke-width="1" fill="none"/><line x1="967.1" y1="376.0" x2="967.1" y2="382.7" stroke="#ffffff" stroke-opacity="0.5" stroke-width="1" fill="none"/><path d="M955.5,382.70 A5.80,5.80 0 0 0 967.10,382.70" stroke="#ffffff" stroke-opacity="0.85" stroke-width="1" fill="none"/><line x1="955.5" y1="383" x2="955.5" y2="394.5" stroke="#ffffff" stroke-opacity="0.5" stroke-width="1" fill="none"/><line x1="967.1" y1="383" x2="967.1" y2="394.5" stroke="#ffffff" stroke-opacity="0.5" stroke-width="1" fill="none"/><line x1="955.5" y1="416.5" x2="955.5" y2="419.5" stroke="#ffffff" stroke-opacity="0.5" stroke-width="1" fill="none"/><line x1="967.1" y1="416.5" x2="967.1" y2="419.5" stroke="#ffffff" stroke-opacity="0.5" stroke-width="1" fill="none"/><line x1="955.5" y1="441.5" x2="955.5" y2="445.5" stroke="#ffffff" stroke-opacity="0.5" stroke-width="1" fill="none"/><line x1="967.1" y1="441.5" x2="967.1" y2="445.5" stroke="#ffffff" stroke-opacity="0.5" stroke-width="1" fill="none"/><line x1="955.5" y1="467.2" x2="955.5" y2="470.5" stroke="#ffffff" stroke-opacity="0.5" stroke-width="1" fill="none"/><line x1="967.1" y1="467.2" x2="967.1" y2="470.5" stroke="#ffffff" stroke-opacity="0.5" stroke-width="1" fill="none"/><line x1="955.5" y1="492.5" x2="955.5" y2="496.5" stroke="#ffffff" stroke-opacity="0.5" stroke-width="1" fill="none"/><line x1="967.1" y1="492.5" x2="967.1" y2="496.5" stroke="#ffffff" stroke-opacity="0.5" stroke-width="1" fill="none"/><line x1="955.5" y1="518.0" x2="955.5" y2="521.5" stroke="#ffffff" stroke-opacity="0.5" stroke-width="1" fill="none"/><line x1="967.1" y1="518.0" x2="967.1" y2="521.5" stroke="#ffffff" stroke-opacity="0.5" stroke-width="1" fill="none"/><line x1="212.9" y1="353.3" x2="227.5" y2="353.3" stroke="#ffffff" stroke-opacity="0.5" stroke-width="1" fill="none"/><path d="M212.9,353.3 A15,15 0 0 0 197.9,368.3" stroke="#ffffff" stroke-opacity="0.85" stroke-width="1" fill="none"/><line x1="197.9" y1="368.3" x2="197.9" y2="402.4" stroke="#ffffff" stroke-opacity="0.5" stroke-width="1" fill="none"/><line x1="213.5" y1="362.5" x2="227.5" y2="362.5" stroke="#ffffff" stroke-opacity="0.5" stroke-width="1" fill="none"/><path d="M213.5,362.5 A6.5,6.5 0 0 0 207.0,369" stroke="#ffffff" stroke-opacity="0.85" stroke-width="1" fill="none"/><line x1="207.0" y1="369" x2="207.0" y2="402.4" stroke="#ffffff" stroke-opacity="0.5" stroke-width="1" fill="none"/><line x1="199.5" y1="402.4" x2="205.5" y2="402.4" stroke="#ffffff" stroke-opacity="0.5" stroke-width="1" fill="none"/><line x1="199.5" y1="519.9" x2="205.5" y2="519.9" stroke="#ffffff" stroke-opacity="0.5" stroke-width="1" fill="none"/><line x1="195.0" y1="406.9" x2="195.0" y2="515.4" stroke="#ffffff" stroke-opacity="0.5" stroke-width="1" fill="none"/><line x1="210.0" y1="406.9" x2="210.0" y2="515.4" stroke="#ffffff" stroke-opacity="0.5" stroke-width="1" fill="none"/><path d="M195.0,406.9 A4.5,4.5 0 0 1 199.5,402.4 M205.5,402.4 A4.5,4.5 0 0 1 210.0,406.9 M210.0,515.4 A4.5,4.5 0 0 1 205.5,519.9 M199.5,519.9 A4.5,4.5 0 0 1 195.0,515.4" stroke="#ffffff" stroke-opacity="0.85" stroke-width="1" fill="none"/><line x1="210.0" y1="501.5" x2="227.5" y2="501.5" stroke="#ffffff" stroke-opacity="0.5" stroke-width="1" fill="none"/><line x1="210.0" y1="510.5" x2="227.5" y2="510.5" stroke="#ffffff" stroke-opacity="0.5" stroke-width="1" fill="none"/><line x1="1005.0" y1="353.3" x2="1019.6" y2="353.3" stroke="#ffffff" stroke-opacity="0.5" stroke-width="1" fill="none"/><path d="M1019.6,353.3 A15,15 0 0 1 1034.6,368.3" stroke="#ffffff" stroke-opacity="0.85" stroke-width="1" fill="none"/><line x1="1034.6" y1="368.3" x2="1034.6" y2="402.4" stroke="#ffffff" stroke-opacity="0.5" stroke-width="1" fill="none"/><line x1="1005.0" y1="362.5" x2="1019.0" y2="362.5" stroke="#ffffff" stroke-opacity="0.5" stroke-width="1" fill="none"/><path d="M1019.0,362.5 A6.5,6.5 0 0 1 1025.5,369" stroke="#ffffff" stroke-opacity="0.85" stroke-width="1" fill="none"/><line x1="1025.5" y1="369" x2="1025.5" y2="402.4" stroke="#ffffff" stroke-opacity="0.5" stroke-width="1" fill="none"/><line x1="1027.0" y1="402.4" x2="1033.0" y2="402.4" stroke="#ffffff" stroke-opacity="0.5" stroke-width="1" fill="none"/><line x1="1027.0" y1="519.9" x2="1033.0" y2="519.9" stroke="#ffffff" stroke-opacity="0.5" stroke-width="1" fill="none"/><line x1="1022.5" y1="406.9" x2="1022.5" y2="515.4" stroke="#ffffff" stroke-opacity="0.5" stroke-width="1" fill="none"/><line x1="1037.5" y1="406.9" x2="1037.5" y2="515.4" stroke="#ffffff" stroke-opacity="0.5" stroke-width="1" fill="none"/><path d="M1022.5,406.9 A4.5,4.5 0 0 1 1027.0,402.4 M1033.0,402.4 A4.5,4.5 0 0 1 1037.5,406.9 M1037.5,515.4 A4.5,4.5 0 0 1 1033.0,519.9 M1027.0,519.9 A4.5,4.5 0 0 1 1022.5,515.4" stroke="#ffffff" stroke-opacity="0.85" stroke-width="1" fill="none"/><line x1="1005.0" y1="501.5" x2="1022.5" y2="501.5" stroke="#ffffff" stroke-opacity="0.5" stroke-width="1" fill="none"/><line x1="1005.0" y1="510.5" x2="1022.5" y2="510.5" stroke="#ffffff" stroke-opacity="0.5" stroke-width="1" fill="none"/><line x1="595.5" y1="474.4" x2="637" y2="474.4" stroke="#900000" stroke-width="1.3"/><circle cx="616.5" cy="474.2" r="5.3" fill="none" stroke="#a00000" stroke-width="1"/><line x1="616.5" y1="454" x2="616.5" y2="494.5" stroke="#c00c0c" stroke-width="1"/><line x1="105.5" y1="148" x2="105.5" y2="155" stroke="#5c5c5c" stroke-width="1"/><line x1="139.5" y1="148" x2="139.5" y2="155" stroke="#5c5c5c" stroke-width="1"/><line x1="174.5" y1="148" x2="174.5" y2="155" stroke="#5c5c5c" stroke-width="1"/><line x1="208.5" y1="148" x2="208.5" y2="155" stroke="#5c5c5c" stroke-width="1"/><line x1="242.5" y1="148" x2="242.5" y2="155" stroke="#5c5c5c" stroke-width="1"/><line x1="276.5" y1="148" x2="276.5" y2="155" stroke="#5c5c5c" stroke-width="1"/><line x1="310.5" y1="148" x2="310.5" y2="155" stroke="#5c5c5c" stroke-width="1"/><line x1="344.5" y1="148" x2="344.5" y2="155" stroke="#5c5c5c" stroke-width="1"/><line x1="378.5" y1="148" x2="378.5" y2="155" stroke="#5c5c5c" stroke-width="1"/><line x1="412.5" y1="148" x2="412.5" y2="155" stroke="#5c5c5c" stroke-width="1"/><line x1="446.5" y1="148" x2="446.5" y2="155" stroke="#5c5c5c" stroke-width="1"/><line x1="480.5" y1="148" x2="480.5" y2="155" stroke="#5c5c5c" stroke-width="1"/><line x1="514.5" y1="148" x2="514.5" y2="155" stroke="#5c5c5c" stroke-width="1"/><line x1="548.5" y1="148" x2="548.5" y2="155" stroke="#5c5c5c" stroke-width="1"/><line x1="582.5" y1="148" x2="582.5" y2="155" stroke="#5c5c5c" stroke-width="1"/><line x1="616.5" y1="148" x2="616.5" y2="155" stroke="#5c5c5c" stroke-width="1"/><line x1="650.5" y1="148" x2="650.5" y2="155" stroke="#5c5c5c" stroke-width="1"/><line x1="684.5" y1="148" x2="684.5" y2="155" stroke="#5c5c5c" stroke-width="1"/><line x1="718.5" y1="148" x2="718.5" y2="155" stroke="#5c5c5c" stroke-width="1"/><line x1="752.5" y1="148" x2="752.5" y2="155" stroke="#5c5c5c" stroke-width="1"/><line x1="786.5" y1="148" x2="786.5" y2="155" stroke="#5c5c5c" stroke-width="1"/><line x1="820.5" y1="148" x2="820.5" y2="155" stroke="#5c5c5c" stroke-width="1"/><line x1="854.5" y1="148" x2="854.5" y2="155" stroke="#5c5c5c" stroke-width="1"/><line x1="888.5" y1="148" x2="888.5" y2="155" stroke="#5c5c5c" stroke-width="1"/><line x1="922.5" y1="148" x2="922.5" y2="155" stroke="#5c5c5c" stroke-width="1"/><line x1="956.5" y1="148" x2="956.5" y2="155" stroke="#5c5c5c" stroke-width="1"/><line x1="990.5" y1="148" x2="990.5" y2="155" stroke="#5c5c5c" stroke-width="1"/><line x1="1024.5" y1="148" x2="1024.5" y2="155" stroke="#5c5c5c" stroke-width="1"/><line x1="1058.5" y1="148" x2="1058.5" y2="155" stroke="#5c5c5c" stroke-width="1"/><line x1="1093.5" y1="148" x2="1093.5" y2="155" stroke="#5c5c5c" stroke-width="1"/><line x1="1127.5" y1="148" x2="1127.5" y2="155" stroke="#5c5c5c" stroke-width="1"/><line x1="88" y1="712.5" x2="95" y2="712.5" stroke="#5c5c5c" stroke-width="1"/><line x1="88" y1="678.5" x2="95" y2="678.5" stroke="#5c5c5c" stroke-width="1"/><line x1="88" y1="644.5" x2="95" y2="644.5" stroke="#5c5c5c" stroke-width="1"/><line x1="88" y1="610.5" x2="95" y2="610.5" stroke="#5c5c5c" stroke-width="1"/><line x1="88" y1="576.5" x2="95" y2="576.5" stroke="#5c5c5c" stroke-width="1"/><line x1="88" y1="542.5" x2="95" y2="542.5" stroke="#5c5c5c" stroke-width="1"/><line x1="88" y1="508.5" x2="95" y2="508.5" stroke="#5c5c5c" stroke-width="1"/><line x1="88" y1="474.5" x2="95" y2="474.5" stroke="#5c5c5c" stroke-width="1"/><line x1="88" y1="440.5" x2="95" y2="440.5" stroke="#5c5c5c" stroke-width="1"/><line x1="88" y1="406.5" x2="95" y2="406.5" stroke="#5c5c5c" stroke-width="1"/><line x1="88" y1="372.5" x2="95" y2="372.5" stroke="#5c5c5c" stroke-width="1"/><line x1="88" y1="337.5" x2="95" y2="337.5" stroke="#5c5c5c" stroke-width="1"/><line x1="88" y1="303.5" x2="95" y2="303.5" stroke="#5c5c5c" stroke-width="1"/><line x1="88" y1="269.5" x2="95" y2="269.5" stroke="#5c5c5c" stroke-width="1"/><line x1="88" y1="235.5" x2="95" y2="235.5" stroke="#5c5c5c" stroke-width="1"/><line x1="88" y1="201.5" x2="95" y2="201.5" stroke="#5c5c5c" stroke-width="1"/><line x1="88" y1="167.5" x2="95" y2="167.5" stroke="#5c5c5c" stroke-width="1"/></g></svg>
<div class="rl" style="left:90.50px;top:133px">-1.5</div>
<div class="rl" style="left:124.50px;top:133px">-1.4</div>
<div class="rl" style="left:159.50px;top:133px">-1.3</div>
<div class="rl" style="left:193.50px;top:133px">-1.2</div>
<div class="rl" style="left:227.50px;top:133px">-1.1</div>
<div class="rl" style="left:261.50px;top:133px">-1</div>
<div class="rl" style="left:295.50px;top:133px">-0.9</div>
<div class="rl" style="left:329.50px;top:133px">-0.8</div>
<div class="rl" style="left:363.50px;top:133px">-0.7</div>
<div class="rl" style="left:397.50px;top:133px">-0.6</div>
<div class="rl" style="left:431.50px;top:133px">-0.5</div>
<div class="rl" style="left:465.50px;top:133px">-0.4</div>
<div class="rl" style="left:499.50px;top:133px">-0.3</div>
<div class="rl" style="left:533.50px;top:133px">-0.2</div>
<div class="rl" style="left:567.50px;top:133px">-0.1</div>
<div class="rl" style="left:601.50px;top:133px">0</div>
<div class="rl" style="left:635.50px;top:133px">0.1</div>
<div class="rl" style="left:669.50px;top:133px">0.2</div>
<div class="rl" style="left:703.50px;top:133px">0.3</div>
<div class="rl" style="left:737.50px;top:133px">0.4</div>
<div class="rl" style="left:771.50px;top:133px">0.5</div>
<div class="rl" style="left:805.50px;top:133px">0.6</div>
<div class="rl" style="left:839.50px;top:133px">0.7</div>
<div class="rl" style="left:873.50px;top:133px">0.8</div>
<div class="rl" style="left:907.50px;top:133px">0.9</div>
<div class="rl" style="left:941.50px;top:133px">1</div>
<div class="rl" style="left:975.50px;top:133px">1.1</div>
<div class="rl" style="left:1009.50px;top:133px">1.2</div>
<div class="rl" style="left:1043.50px;top:133px">1.3</div>
<div class="rl" style="left:1078.50px;top:133px">1.4</div>
<div class="rl" style="left:1112.50px;top:133px">1.5</div>
<div class="rv" style="left:63.20px;top:706.70px">-0.7</div>
<div class="rv" style="left:63.20px;top:672.70px">-0.6</div>
<div class="rv" style="left:63.20px;top:638.70px">-0.5</div>
<div class="rv" style="left:63.20px;top:604.70px">-0.4</div>
<div class="rv" style="left:63.20px;top:570.70px">-0.3</div>
<div class="rv" style="left:63.20px;top:536.70px">-0.2</div>
<div class="rv" style="left:63.20px;top:502.70px">-0.1</div>
<div class="rv" style="left:63.20px;top:468.70px">0</div>
<div class="rv" style="left:63.20px;top:434.70px">0.1</div>
<div class="rv" style="left:63.20px;top:400.70px">0.2</div>
<div class="rv" style="left:63.20px;top:366.70px">0.3</div>
<div class="rv" style="left:63.20px;top:331.70px">0.4</div>
<div class="rv" style="left:63.20px;top:297.70px">0.5</div>
<div class="rv" style="left:63.20px;top:263.70px">0.6</div>
<div class="rv" style="left:63.20px;top:229.70px">0.7</div>
<div class="rv" style="left:63.20px;top:195.70px">0.8</div>
<div class="rv" style="left:63.20px;top:161.70px">0.9</div>
<svg class="a" style="left:0;top:0" width="1500" height="844" viewBox="0 0 1500 844"><defs>
<linearGradient id="gbtn" x1="0" y1="0" x2="0" y2="1"><stop offset="0" stop-color="#f6f6f6"/><stop offset="0.5" stop-color="#ececec"/><stop offset="1" stop-color="#f8f8f8"/></linearGradient>
<linearGradient id="gpaper" x1="0" y1="0" x2="1" y2="1"><stop offset="0" stop-color="#ececec"/><stop offset="1" stop-color="#fdfdfd"/></linearGradient>
<linearGradient id="gpaper2" x1="0" y1="0" x2="0" y2="1"><stop offset="0" stop-color="#f8f8f8"/><stop offset="1" stop-color="#e8e8e8"/></linearGradient>
<radialGradient id="gglow"><stop offset="0" stop-color="#ffffff"/><stop offset="0.3" stop-color="#fff36a"/><stop offset="0.75" stop-color="#f0e020" stop-opacity="0.9"/><stop offset="1" stop-color="#f0e020" stop-opacity="0"/></radialGradient>
<linearGradient id="gfold" x1="0" y1="0" x2="0" y2="1"><stop offset="0" stop-color="#8ab0e0"/><stop offset="1" stop-color="#5a8cd0"/></linearGradient>
<linearGradient id="gflop" x1="0" y1="0" x2="1" y2="0"><stop offset="0" stop-color="#7eb0f8"/><stop offset="0.5" stop-color="#4a8cf0"/><stop offset="1" stop-color="#3478f0"/></linearGradient>
<linearGradient id="glabel" x1="0" y1="0" x2="1" y2="1"><stop offset="0" stop-color="#ffffff"/><stop offset="0.5" stop-color="#e4ecff"/><stop offset="1" stop-color="#ffffff"/></linearGradient>
<linearGradient id="gshut" x1="0" y1="0" x2="0" y2="1"><stop offset="0" stop-color="#f4f4f4"/><stop offset="1" stop-color="#c8c8d0"/></linearGradient>
<linearGradient id="gprint" x1="0" y1="0" x2="0" y2="1"><stop offset="0" stop-color="#f8f8f8"/><stop offset="1" stop-color="#c8c8c8"/></linearGradient>
<radialGradient id="gmag" cx="0.4" cy="0.35"><stop offset="0" stop-color="#eaf2fa"/><stop offset="1" stop-color="#a8c4e4"/></radialGradient>
<linearGradient id="gundo" x1="0" y1="0" x2="1" y2="1"><stop offset="0" stop-color="#6cc86c"/><stop offset="1" stop-color="#1e9a3a"/></linearGradient>
<linearGradient id="gredo" x1="0" y1="0" x2="1" y2="1"><stop offset="0" stop-color="#b4e0b4"/><stop offset="1" stop-color="#78c08a"/></linearGradient>
<linearGradient id="gerase" x1="0" y1="0" x2="1" y2="0"><stop offset="0" stop-color="#e88a8a"/><stop offset="1" stop-color="#d46868"/></linearGradient>
<linearGradient id="gpen" x1="0" y1="0" x2="1" y2="0"><stop offset="0" stop-color="#f04040"/><stop offset="1" stop-color="#c01818"/></linearGradient>
<radialGradient id="gring"><stop offset="0.8" stop-color="#f6f6f2"/><stop offset="1" stop-color="#d4d4cc"/></radialGradient>
<linearGradient id="gblue" x1="0" y1="0" x2="0" y2="1"><stop offset="0" stop-color="#a8c8ec"/><stop offset="0.45" stop-color="#78a8e0"/><stop offset="0.55" stop-color="#5a90d8"/><stop offset="1" stop-color="#88b8ec"/></linearGradient>
</defs><rect x="7" y="32" width="2" height="2" fill="#a6a6a6"/><rect x="7" y="38" width="2" height="2" fill="#a6a6a6"/><rect x="7" y="44" width="2" height="2" fill="#a6a6a6"/><rect x="7" y="50" width="2" height="2" fill="#a6a6a6"/><rect x="7" y="56" width="2" height="2" fill="#a6a6a6"/><rect x="12" y="25.3" width="43" height="42.4" rx="4" fill="#b5b5b5"/><rect x="88" y="32" width="2" height="2" fill="#a6a6a6"/><rect x="88" y="38" width="2" height="2" fill="#a6a6a6"/><rect x="88" y="44" width="2" height="2" fill="#a6a6a6"/><rect x="88" y="50" width="2" height="2" fill="#a6a6a6"/><rect x="88" y="56" width="2" height="2" fill="#a6a6a6"/><rect x="187" y="26" width="1.1" height="1.1" fill="#555"/><rect x="187" y="29" width="1.1" height="1.1" fill="#555"/><rect x="187" y="32" width="1.1" height="1.1" fill="#555"/><rect x="187" y="35" width="1.1" height="1.1" fill="#555"/><rect x="187" y="38" width="1.1" height="1.1" fill="#555"/><rect x="187" y="41" width="1.1" height="1.1" fill="#555"/><rect x="187" y="44" width="1.1" height="1.1" fill="#555"/><rect x="187" y="47" width="1.1" height="1.1" fill="#555"/><rect x="187" y="50" width="1.1" height="1.1" fill="#555"/><rect x="187" y="53" width="1.1" height="1.1" fill="#555"/><rect x="187" y="56" width="1.1" height="1.1" fill="#555"/><rect x="187" y="59" width="1.1" height="1.1" fill="#555"/><rect x="187" y="62" width="1.1" height="1.1" fill="#555"/><rect x="187" y="65" width="1.1" height="1.1" fill="#555"/><rect x="289" y="26" width="1.1" height="1.1" fill="#555"/><rect x="289" y="29" width="1.1" height="1.1" fill="#555"/><rect x="289" y="32" width="1.1" height="1.1" fill="#555"/><rect x="289" y="35" width="1.1" height="1.1" fill="#555"/><rect x="289" y="38" width="1.1" height="1.1" fill="#555"/><rect x="289" y="41" width="1.1" height="1.1" fill="#555"/><rect x="289" y="44" width="1.1" height="1.1" fill="#555"/><rect x="289" y="47" width="1.1" height="1.1" fill="#555"/><rect x="289" y="50" width="1.1" height="1.1" fill="#555"/><rect x="289" y="53" width="1.1" height="1.1" fill="#555"/><rect x="289" y="56" width="1.1" height="1.1" fill="#555"/><rect x="289" y="59" width="1.1" height="1.1" fill="#555"/><rect x="289" y="62" width="1.1" height="1.1" fill="#555"/><rect x="289" y="65" width="1.1" height="1.1" fill="#555"/><rect x="345" y="26" width="1.1" height="1.1" fill="#555"/><rect x="345" y="29" width="1.1" height="1.1" fill="#555"/><rect x="345" y="32" width="1.1" height="1.1" fill="#555"/><rect x="345" y="35" width="1.1" height="1.1" fill="#555"/><rect x="345" y="38" width="1.1" height="1.1" fill="#555"/><rect x="345" y="41" width="1.1" height="1.1" fill="#555"/><rect x="345" y="44" width="1.1" height="1.1" fill="#555"/><rect x="345" y="47" width="1.1" height="1.1" fill="#555"/><rect x="345" y="50" width="1.1" height="1.1" fill="#555"/><rect x="345" y="53" width="1.1" height="1.1" fill="#555"/><rect x="345" y="56" width="1.1" height="1.1" fill="#555"/><rect x="345" y="59" width="1.1" height="1.1" fill="#555"/><rect x="345" y="62" width="1.1" height="1.1" fill="#555"/><rect x="345" y="65" width="1.1" height="1.1" fill="#555"/><rect x="403" y="32" width="2" height="2" fill="#a6a6a6"/><rect x="403" y="38" width="2" height="2" fill="#a6a6a6"/><rect x="403" y="44" width="2" height="2" fill="#a6a6a6"/><rect x="403" y="50" width="2" height="2" fill="#a6a6a6"/><rect x="403" y="56" width="2" height="2" fill="#a6a6a6"/><rect x="502" y="26" width="1.1" height="1.1" fill="#555"/><rect x="502" y="29" width="1.1" height="1.1" fill="#555"/><rect x="502" y="32" width="1.1" height="1.1" fill="#555"/><rect x="502" y="35" width="1.1" height="1.1" fill="#555"/><rect x="502" y="38" width="1.1" height="1.1" fill="#555"/><rect x="502" y="41" width="1.1" height="1.1" fill="#555"/><rect x="502" y="44" width="1.1" height="1.1" fill="#555"/><rect x="502" y="47" width="1.1" height="1.1" fill="#555"/><rect x="502" y="50" width="1.1" height="1.1" fill="#555"/><rect x="502" y="53" width="1.1" height="1.1" fill="#555"/><rect x="502" y="56" width="1.1" height="1.1" fill="#555"/><rect x="502" y="59" width="1.1" height="1.1" fill="#555"/><rect x="502" y="62" width="1.1" height="1.1" fill="#555"/><rect x="502" y="65" width="1.1" height="1.1" fill="#555"/><rect x="558" y="26" width="1.1" height="1.1" fill="#555"/><rect x="558" y="29" width="1.1" height="1.1" fill="#555"/><rect x="558" y="32" width="1.1" height="1.1" fill="#555"/><rect x="558" y="35" width="1.1" height="1.1" fill="#555"/><rect x="558" y="38" width="1.1" height="1.1" fill="#555"/><rect x="558" y="41" width="1.1" height="1.1" fill="#555"/><rect x="558" y="44" width="1.1" height="1.1" fill="#555"/><rect x="558" y="47" width="1.1" height="1.1" fill="#555"/><rect x="558" y="50" width="1.1" height="1.1" fill="#555"/><rect x="558" y="53" width="1.1" height="1.1" fill="#555"/><rect x="558" y="56" width="1.1" height="1.1" fill="#555"/><rect x="558" y="59" width="1.1" height="1.1" fill="#555"/><rect x="558" y="62" width="1.1" height="1.1" fill="#555"/><rect x="558" y="65" width="1.1" height="1.1" fill="#555"/><rect x="708" y="32" width="2" height="2" fill="#a6a6a6"/><rect x="708" y="38" width="2" height="2" fill="#a6a6a6"/><rect x="708" y="44" width="2" height="2" fill="#a6a6a6"/><rect x="708" y="50" width="2" height="2" fill="#a6a6a6"/><rect x="708" y="56" width="2" height="2" fill="#a6a6a6"/><rect x="805" y="25.3" width="42.5" height="42.4" rx="4" fill="#b5b5b5"/><rect x="854" y="26" width="1.1" height="1.1" fill="#555"/><rect x="854" y="29" width="1.1" height="1.1" fill="#555"/><rect x="854" y="32" width="1.1" height="1.1" fill="#555"/><rect x="854" y="35" width="1.1" height="1.1" fill="#555"/><rect x="854" y="38" width="1.1" height="1.1" fill="#555"/><rect x="854" y="41" width="1.1" height="1.1" fill="#555"/><rect x="854" y="44" width="1.1" height="1.1" fill="#555"/><rect x="854" y="47" width="1.1" height="1.1" fill="#555"/><rect x="854" y="50" width="1.1" height="1.1" fill="#555"/><rect x="854" y="53" width="1.1" height="1.1" fill="#555"/><rect x="854" y="56" width="1.1" height="1.1" fill="#555"/><rect x="854" y="59" width="1.1" height="1.1" fill="#555"/><rect x="854" y="62" width="1.1" height="1.1" fill="#555"/><rect x="854" y="65" width="1.1" height="1.1" fill="#555"/><rect x="862" y="25.3" width="42.7" height="42.4" rx="4" fill="#b5b5b5"/><rect x="911" y="26" width="1.1" height="1.1" fill="#555"/><rect x="911" y="29" width="1.1" height="1.1" fill="#555"/><rect x="911" y="32" width="1.1" height="1.1" fill="#555"/><rect x="911" y="35" width="1.1" height="1.1" fill="#555"/><rect x="911" y="38" width="1.1" height="1.1" fill="#555"/><rect x="911" y="41" width="1.1" height="1.1" fill="#555"/><rect x="911" y="44" width="1.1" height="1.1" fill="#555"/><rect x="911" y="47" width="1.1" height="1.1" fill="#555"/><rect x="911" y="50" width="1.1" height="1.1" fill="#555"/><rect x="911" y="53" width="1.1" height="1.1" fill="#555"/><rect x="911" y="56" width="1.1" height="1.1" fill="#555"/><rect x="911" y="59" width="1.1" height="1.1" fill="#555"/><rect x="911" y="62" width="1.1" height="1.1" fill="#555"/><rect x="911" y="65" width="1.1" height="1.1" fill="#555"/><rect x="7" y="77" width="2" height="2" fill="#a6a6a6"/><rect x="7" y="83" width="2" height="2" fill="#a6a6a6"/><rect x="7" y="89" width="2" height="2" fill="#a6a6a6"/><rect x="7" y="95" width="2" height="2" fill="#a6a6a6"/><rect x="15" y="73.5" width="43" height="30.5" rx="5" fill="url(#gbtn)" stroke="#828282" stroke-width="2"/><rect x="67" y="71.5" width="1.1" height="1.1" fill="#555"/><rect x="67" y="74.5" width="1.1" height="1.1" fill="#555"/><rect x="67" y="77.5" width="1.1" height="1.1" fill="#555"/><rect x="67" y="80.5" width="1.1" height="1.1" fill="#555"/><rect x="67" y="83.5" width="1.1" height="1.1" fill="#555"/><rect x="67" y="86.5" width="1.1" height="1.1" fill="#555"/><rect x="67" y="89.5" width="1.1" height="1.1" fill="#555"/><rect x="67" y="92.5" width="1.1" height="1.1" fill="#555"/><rect x="67" y="95.5" width="1.1" height="1.1" fill="#555"/><rect x="67" y="98.5" width="1.1" height="1.1" fill="#555"/><rect x="67" y="101.5" width="1.1" height="1.1" fill="#555"/><rect x="67" y="104.5" width="1.1" height="1.1" fill="#555"/><path d="M27.50,35.50 L27.50,52.50 L31.50,48.70 L34.50,55.00 L37.10,53.80 L34.30,47.70 L39.50,47.70 Z" fill="#fff" stroke="#1a1a1a" stroke-width="1.1" stroke-linejoin="round"/><path d="M31.00,79.50 L31.00,92.76 L34.12,89.80 L36.46,94.71 L38.49,93.77 L36.30,89.02 L40.36,89.02 Z" fill="#fff" stroke="#1a1a1a" stroke-width="1.0" stroke-linejoin="round"/><rect x="101.5" y="32.5" width="24" height="27" rx="1" fill="url(#gpaper)" stroke="#8a8a8a" stroke-width="1"/><line x1="102" y1="60" x2="125" y2="60" stroke="#7a7a7a" stroke-width="1.2"/><circle cx="121.8" cy="37.4" r="6.5" fill="url(#gglow)"/><path d="M144.5,35 L151,35 L151,56 L146,57.5 Z" fill="#9a9a9a" stroke="#6a6a6a" stroke-width="0.8"/><path d="M151,32.5 L172.8,32.5 L172,44 L150,44 Z" fill="#f4f4f4" stroke="#7a7a7a" stroke-width="0.9"/><rect x="153" y="35.5" width="16" height="1.3" fill="#b0b0b0"/><rect x="153" y="38.5" width="16" height="1.3" fill="#b8b8b8"/><path d="M149.5,43.2 L175.5,43.2 L171.5,57.6 L147,57.6 Z" fill="url(#gfold)" stroke="#3b6cb0" stroke-width="0.9"/><rect x="203.5" y="33.3" width="24" height="25" rx="3" fill="url(#gflop)" stroke="#1f1f9a" stroke-width="1.2"/><rect x="206.6" y="34.3" width="18" height="11.3" fill="url(#glabel)"/><rect x="208.7" y="48" width="12" height="10" fill="url(#gshut)"/><rect x="210.6" y="50.2" width="2.2" height="4.8" fill="#1a3cd0"/><rect x="249.5" y="33.3" width="24" height="25" rx="3" fill="url(#gflop)" stroke="#1f1f9a" stroke-width="1.2"/><rect x="252.6" y="34.3" width="18" height="11.3" fill="url(#glabel)"/><rect x="254.7" y="48" width="12" height="10" fill="url(#gshut)"/><rect x="256.6" y="50.2" width="2.2" height="4.8" fill="#1a3cd0"/><path d="M260.5,51.5 L274,36.5 L277.5,39.5 L264,54.5 Z" fill="#f5b400" stroke="#a03008" stroke-width="0.9"/><path d="M274,36.5 L276,34.3 L279.3,37.3 L277.5,39.5 Z" fill="#e07050" stroke="#a03008" stroke-width="0.8"/><path d="M260.5,51.5 L264,54.5 L259,56 Z" fill="#f0dcb0" stroke="#803010" stroke-width="0.6"/><rect x="305.8" y="42.6" width="24.6" height="15.8" rx="3" fill="#000"/><line x1="318" y1="45.5" x2="309.3" y2="39.6" stroke="#000" stroke-width="5"/><circle cx="309.3" cy="39.6" r="3.4" fill="#000"/><line x1="318" y1="45.5" x2="318" y2="35.8" stroke="#000" stroke-width="5"/><circle cx="318" cy="35.8" r="3.4" fill="#000"/><line x1="318" y1="45.5" x2="326.7" y2="39.6" stroke="#000" stroke-width="5"/><circle cx="326.7" cy="39.6" r="3.4" fill="#000"/><line x1="318" y1="45.5" x2="312.6" y2="36.8" stroke="#000" stroke-width="5"/><circle cx="312.6" cy="36.8" r="3.4" fill="#000"/><line x1="318" y1="45.5" x2="323.4" y2="36.8" stroke="#000" stroke-width="5"/><circle cx="323.4" cy="36.8" r="3.4" fill="#000"/><line x1="318" y1="45.5" x2="309.3" y2="39.6" stroke="#f7a830" stroke-width="2.4"/><circle cx="309.3" cy="39.6" r="2.2" fill="#f7a830"/><line x1="318" y1="45.5" x2="318" y2="35.8" stroke="#f7a830" stroke-width="2.4"/><circle cx="318" cy="35.8" r="2.2" fill="#f7a830"/><line x1="318" y1="45.5" x2="326.7" y2="39.6" stroke="#f7a830" stroke-width="2.4"/><circle cx="326.7" cy="39.6" r="2.2" fill="#f7a830"/><rect x="308" y="44.3" width="20.4" height="1.9" rx="0.9" fill="#f7a830"/><text x="318.1" y="56.6" text-anchor="middle" font-family="Liberation Sans" font-weight="bold" font-size="12.8" fill="#fff" transform="translate(318.1 0) scale(0.78 1) translate(-318.1 0)">SVG</text><rect x="364.5" y="32" width="19" height="15" rx="1" fill="#e4e4e4" stroke="#c0c0c0" stroke-width="0.9"/><rect x="367" y="34.5" width="13" height="1" fill="#c8c8c8"/><rect x="376" y="38" width="5" height="1" fill="#cfcfcf"/><rect x="360.5" y="43.5" width="27" height="14.5" rx="3" fill="url(#gprint)" stroke="#a8a8a8" stroke-width="0.9"/><rect x="362.5" y="47.5" width="23" height="4" rx="1.5" fill="#f4f4f4" stroke="#c4c4c4" stroke-width="0.7"/><rect x="361" y="56" width="26" height="2.2" rx="1" fill="#9c9c9c"/><line x1="373.5" y1="45.5" x2="381" y2="52.5" stroke="#7a7a7a" stroke-width="3.4" stroke-linecap="round"/><line x1="374" y1="45.6" x2="380.6" y2="51.8" stroke="#b0b0b0" stroke-width="1.1" stroke-linecap="round"/><circle cx="369.4" cy="40.4" r="7.4" fill="#f2f2f2" stroke="#c4c4c4" stroke-width="0.8"/><circle cx="369.4" cy="40.4" r="5.7" fill="url(#gmag)" stroke="#4f86cc" stroke-width="1.1"/><g><path d="M421.7,45.5 C425.2,40 429.2,37.5 433.2,37.5 C439.2,37.5 443.2,41.5 443.2,46.5 C443.2,52.5 437.2,57.5 427.2,57.8 C433.7,55.5 437.8,51.5 437.8,47 C437.8,43.5 435.7,41.8 433.0,41.8 C430.2,41.8 428.2,43.5 426.2,46.5 Z" fill="url(#gundo)" stroke="#1a7028" stroke-width="0.7"/><path d="M414.4,37.8 L414.59999999999997,52 L428.2,52 Z" fill="#5cc060" stroke="#1a7028" stroke-width="0.7"/></g><g transform="translate(950.1999999999999 0) scale(-1 1)"><path d="M467.9,45.5 C471.4,40 475.4,37.5 479.4,37.5 C485.4,37.5 489.4,41.5 489.4,46.5 C489.4,52.5 483.4,57.5 473.4,57.8 C479.9,55.5 484.0,51.5 484.0,47 C484.0,43.5 481.9,41.8 479.2,41.8 C476.4,41.8 474.4,43.5 472.4,46.5 Z" fill="url(#gredo)" stroke="#78b888" stroke-width="0.7"/><path d="M460.59999999999997,37.8 L460.79999999999995,52 L474.4,52 Z" fill="#a8dcb0" stroke="#78b888" stroke-width="0.7"/></g><ellipse cx="532" cy="56.5" rx="11" ry="1.5" fill="#d0d0d0" opacity="0.8"/><g transform="translate(520.5 53) rotate(-45)"><rect x="0" y="-4" width="24" height="8" rx="1" fill="#e07676" stroke="#b06060" stroke-width="0.7"/><rect x="6.5" y="-3.2" width="17" height="2.6" fill="#f6f0f0"/><rect x="0" y="-4" width="6.5" height="8" rx="1" fill="#f2f2f2" stroke="#a8a8a8" stroke-width="0.7"/></g><path d="M589,31 L591.5,31 L590,46 L587.5,46 Z" fill="#f4f4f4" stroke="#8a8a8a" stroke-width="0.7"/><path d="M590,45.5 L601,37 L601.5,39.5 L590.5,47 Z" fill="#f4f4f4" stroke="#8a8a8a" stroke-width="0.7"/><ellipse cx="579.5" cy="47.8" rx="6" ry="3.5" transform="rotate(-20 579.5 47.8)" fill="none" stroke="#e07a80" stroke-width="2.2"/><ellipse cx="588.8" cy="55" rx="3.3" ry="5.5" fill="none" stroke="#e07a80" stroke-width="2.2"/><path d="M585,46 L588,49" stroke="#e07a80" stroke-width="2"/><path d="M573.3,57.3 h6 M576.3,54.3 v6" stroke="#333" stroke-width="1.1"/><rect x="618.7" y="30.5" width="21" height="25" rx="1.5" fill="#f2f2f2" stroke="#c8c8c8" stroke-width="0.8"/><path d="M626.8,36.3 L647.8,36.3 L647.8,57.5 L644,61.3 L626.8,61.3 Z" fill="url(#gpaper2)" stroke="#b4b4b4" stroke-width="0.8"/><path d="M644,61.3 L644,57.5 L647.8,57.5 Z" fill="#c0c0c0"/><rect x="630.5" y="43" width="13" height="0.9" fill="#cfcfcf"/><rect x="630.5" y="45.5" width="13" height="0.9" fill="#cfcfcf"/><rect x="630.5" y="48" width="13" height="0.9" fill="#cfcfcf"/><rect x="630.5" y="51" width="13" height="0.9" fill="#cfcfcf"/><path d="M619.5,56.5 h6 M622.5,53.5 v6" stroke="#333" stroke-width="1.1"/><rect x="666" y="33" width="25.6" height="27.2" rx="1.5" fill="#c28a2a" stroke="#8a5a10" stroke-width="0.9"/><rect x="668.5" y="34.5" width="20.5" height="23.5" fill="url(#gpaper)"/><path d="M684.5,58 L689,53.5 L689,58 Z" fill="#9a9a9a"/><rect x="672" y="40.5" width="13" height="0.9" fill="#c0c0c0"/><rect x="672" y="43" width="13" height="0.9" fill="#c0c0c0"/><rect x="672" y="45.5" width="13" height="0.9" fill="#c0c0c0"/><rect x="672" y="48" width="13" height="0.9" fill="#c0c0c0"/><rect x="672" y="50.5" width="13" height="0.9" fill="#c0c0c0"/><path d="M673,37 L673,33 L676.5,33 L676.5,30.2 L682,30.2 L682,33 L685.5,33 L685.5,37 Z" fill="#8f8f84" stroke="#5a5a50" stroke-width="0.7"/><g transform="translate(724.3 55.3) rotate(-44)"><path d="M0,0 L5,-2.4 L5,2.4 Z" fill="#f0d0a0" stroke="#503010" stroke-width="0.5"/><path d="M0,0 L1.6,-0.8 L1.6,0.8 Z" fill="#111"/><rect x="5" y="-2.5" width="18.5" height="5" fill="url(#gpen)" stroke="#6a2008" stroke-width="0.7"/><rect x="19" y="-2.5" width="1.6" height="5" fill="#d8d8d8"/><path d="M23.5,-2.5 h1.5 a2.5,2.5 0 0 1 0,5 h-1.5 Z" fill="#f03030" stroke="#6a2008" stroke-width="0.7"/></g><rect x="723" y="55.8" width="22" height="1.4" fill="#f00000"/><rect x="765.7" y="35.7" width="28.4" height="21.3" rx="1" fill="#000080" stroke="#1a1a30" stroke-width="1"/><path d="M769,54 L790.5,54 L790.5,39.5 Z" fill="none" stroke="#ffffff" stroke-width="1.1" stroke-dasharray="2.2 1.4"/><circle cx="825.8" cy="45.6" r="13.4" fill="none" stroke="#000" stroke-width="2"/><line x1="812" y1="59.5" x2="840" y2="31.7" stroke="#1010e0" stroke-width="1.1"/><rect x="869.8" y="33.1" width="1.8" height="1.8" fill="#000"/><rect x="869.8" y="41.2" width="1.8" height="1.8" fill="#000"/><rect x="869.8" y="49.2" width="1.8" height="1.8" fill="#000"/><rect x="869.8" y="57.2" width="1.8" height="1.8" fill="#000"/><rect x="877.9" y="33.1" width="1.8" height="1.8" fill="#000"/><rect x="877.9" y="41.2" width="1.8" height="1.8" fill="#000"/><rect x="877.9" y="49.2" width="1.8" height="1.8" fill="#000"/><rect x="877.9" y="57.2" width="1.8" height="1.8" fill="#000"/><rect x="886.0" y="33.1" width="1.8" height="1.8" fill="#000"/><rect x="886.0" y="41.2" width="1.8" height="1.8" fill="#000"/><rect x="886.0" y="49.2" width="1.8" height="1.8" fill="#000"/><rect x="886.0" y="57.2" width="1.8" height="1.8" fill="#000"/><rect x="894.1" y="33.1" width="1.8" height="1.8" fill="#000"/><rect x="894.1" y="41.2" width="1.8" height="1.8" fill="#000"/><rect x="894.1" y="49.2" width="1.8" height="1.8" fill="#000"/><rect x="894.1" y="57.2" width="1.8" height="1.8" fill="#000"/><g><line x1="944" y1="49.8" x2="950.5" y2="56.599999999999994" stroke="#606060" stroke-width="4.4" stroke-linecap="round"/><line x1="945" y1="50.4" x2="950" y2="55.599999999999994" stroke="#8a8a8a" stroke-width="1.2" stroke-linecap="round"/><circle cx="936" cy="41.8" r="11.4" fill="url(#gring)" stroke="#bdbdb4" stroke-width="0.9"/><circle cx="936" cy="41.8" r="9.4" fill="url(#gblue)" stroke="#4a7ac0" stroke-width="0.6"/></g><path d="M931,40 h3.5 v-4 h3.5 v4 h3.5 v3.6 h-3.5 v4 h-3.5 v-4 h-3.5 Z" fill="#fff" stroke="#2a5aa0" stroke-width="0.6"/><g><line x1="990.3" y1="49.8" x2="996.8" y2="56.599999999999994" stroke="#606060" stroke-width="4.4" stroke-linecap="round"/><line x1="991.3" y1="50.4" x2="996.3" y2="55.599999999999994" stroke="#8a8a8a" stroke-width="1.2" stroke-linecap="round"/><circle cx="982.3" cy="41.8" r="11.4" fill="url(#gring)" stroke="#bdbdb4" stroke-width="0.9"/><circle cx="982.3" cy="41.8" r="9.4" fill="url(#gblue)" stroke="#4a7ac0" stroke-width="0.6"/></g><rect x="976.5" y="40" width="11.6" height="3.6" fill="#fff" stroke="#2a5aa0" stroke-width="0.6"/><g><line x1="1036" y1="49.8" x2="1042.5" y2="56.599999999999994" stroke="#606060" stroke-width="4.4" stroke-linecap="round"/><line x1="1037" y1="50.4" x2="1042" y2="55.599999999999994" stroke="#8a8a8a" stroke-width="1.2" stroke-linecap="round"/><circle cx="1028" cy="41.8" r="11.4" fill="url(#gring)" stroke="#bdbdb4" stroke-width="0.9"/><circle cx="1028" cy="41.8" r="9.4" fill="url(#gblue)" stroke="#4a7ac0" stroke-width="0.6"/></g><path d="M1022.5,40.5 v-4 h4 M1029.5,36.5 h4 v4 M1033.5,43.5 v4 h-4 M1026.5,47.5 h-4 v-4" fill="none" stroke="#fff" stroke-width="2"/><g opacity="0.55"><line x1="1082" y1="49.8" x2="1088.5" y2="56.599999999999994" stroke="#606060" stroke-width="4.4" stroke-linecap="round"/><line x1="1083" y1="50.4" x2="1088" y2="55.599999999999994" stroke="#8a8a8a" stroke-width="1.2" stroke-linecap="round"/><circle cx="1074" cy="41.8" r="11.4" fill="url(#gring)" stroke="#bdbdb4" stroke-width="0.9"/><circle cx="1074" cy="41.8" r="9.4" fill="url(#gblue)" stroke="#4a7ac0" stroke-width="0.6"/></g><path d="M1068.5,40.5 v-4 h4 M1075.5,36.5 h4 v4 M1079.5,43.5 v4 h-4 M1072.5,47.5 h-4 v-4" fill="none" stroke="#e04040" stroke-width="2" opacity="0.75"/><g><line x1="1128" y1="49.8" x2="1134.5" y2="56.599999999999994" stroke="#606060" stroke-width="4.4" stroke-linecap="round"/><line x1="1129" y1="50.4" x2="1134" y2="55.599999999999994" stroke="#8a8a8a" stroke-width="1.2" stroke-linecap="round"/><circle cx="1120" cy="41.8" r="11.4" fill="url(#gring)" stroke="#bdbdb4" stroke-width="0.9"/><circle cx="1120" cy="41.8" r="9.4" fill="url(#gblue)" stroke="#4a7ac0" stroke-width="0.6"/></g><path d="M1113,41.8 L1118.5,36.5 L1118.5,39.8 L1126,39.8 L1126,44 L1118.5,44 L1118.5,47.2 Z" fill="#fff" stroke="#2a5aa0" stroke-width="0.6"/><rect x="1154" y="30.5" width="28.5" height="17" fill="#fff" stroke="#5a8ad0" stroke-width="1"/><g><line x1="1176" y1="52.5" x2="1182.5" y2="59.3" stroke="#606060" stroke-width="4.4" stroke-linecap="round"/><line x1="1177" y1="53.1" x2="1182" y2="58.3" stroke="#8a8a8a" stroke-width="1.2" stroke-linecap="round"/><circle cx="1168" cy="44.5" r="10.6" fill="url(#gring)" stroke="#bdbdb4" stroke-width="0.9"/><circle cx="1168" cy="44.5" r="8.6" fill="url(#gblue)" stroke="#4a7ac0" stroke-width="0.6"/></g><g><line x1="1220" y1="50" x2="1226.5" y2="56.8" stroke="#606060" stroke-width="4.4" stroke-linecap="round"/><line x1="1221" y1="50.6" x2="1226" y2="55.8" stroke="#8a8a8a" stroke-width="1.2" stroke-linecap="round"/><circle cx="1212" cy="42" r="11.4" fill="url(#gring)" stroke="#bdbdb4" stroke-width="0.9"/><circle cx="1212" cy="42" r="9.4" fill="url(#gblue)" stroke="#4a7ac0" stroke-width="0.6"/></g><path d="M1212,31 L1215,35 L1213.2,35 L1213.2,40.8 L1219,40.8 L1219,39 L1223,42 L1219,45 L1219,43.2 L1213.2,43.2 L1213.2,49 L1215,49 L1212,53 L1209,49 L1210.8,49 L1210.8,43.2 L1205,43.2 L1205,45 L1201,42 L1205,39 L1205,40.8 L1210.8,40.8 L1210.8,35 L1209,35 Z" fill="#fff" stroke="#3a6ab0" stroke-width="0.7"/><rect x="7" y="116" width="2" height="2" fill="#a6a6a6"/><rect x="13" y="116" width="2" height="2" fill="#a6a6a6"/><rect x="19" y="116" width="2" height="2" fill="#a6a6a6"/><rect x="25" y="116" width="2" height="2" fill="#a6a6a6"/><rect x="31" y="116" width="2" height="2" fill="#a6a6a6"/><rect x="37" y="116" width="2" height="2" fill="#a6a6a6"/><rect x="43" y="116" width="2" height="2" fill="#a6a6a6"/><rect x="49" y="116" width="2" height="2" fill="#a6a6a6"/><rect x="55" y="116" width="2" height="2" fill="#a6a6a6"/><rect x="61" y="116" width="2" height="2" fill="#a6a6a6"/><path d="M31.9,147.4 L31.9,152.4 L26.9,152.4 Z" fill="#000"/><path d="M66.7,147.4 L66.7,152.4 L61.7,152.4 Z" fill="#000"/><path d="M31.9,182.3 L31.9,187.3 L26.9,187.3 Z" fill="#000"/><path d="M66.7,182.3 L66.7,187.3 L61.7,187.3 Z" fill="#000"/><path d="M31.9,217.3 L31.9,222.3 L26.9,222.3 Z" fill="#000"/><path d="M66.7,217.3 L66.7,222.3 L61.7,222.3 Z" fill="#000"/><path d="M31.9,252.3 L31.9,257.3 L26.9,257.3 Z" fill="#000"/><path d="M66.7,252.3 L66.7,257.3 L61.7,257.3 Z" fill="#000"/><path d="M31.9,287.3 L31.9,292.3 L26.9,292.3 Z" fill="#000"/><path d="M66.7,330.7 L66.7,335.7 L61.7,335.7 Z" fill="#000"/><path d="M31.9,409.0 L31.9,414.0 L26.9,414.0 Z" fill="#000"/><path d="M66.7,444.0 L66.7,449.0 L61.7,449.0 Z" fill="#000"/><path d="M31.9,486.6 L31.9,491.6 L26.9,491.6 Z" fill="#000"/><path d="M8.2,131.8 h6.6 M11.5,128.5 v6.6" stroke="#111" stroke-width="1.2"/><path d="M22.0,140.5 h6.6 M25.3,137.2 v6.6" stroke="#111" stroke-width="1.2"/><path d="M9.0,146.5 h6.6 M12.3,143.2 v6.6" stroke="#111" stroke-width="1.2"/><line x1="41.8" y1="145" x2="64.8" y2="134" stroke="#222" fill="none" stroke-width="1.2"/><path d="M7.5,183.2 C9,172 17,165 27.5,163.5" stroke="#222" fill="none" stroke-width="1.2"/><circle cx="52.3" cy="173.5" r="9.6" stroke="#222" fill="none" stroke-width="1.2"/><ellipse cx="18.3" cy="208.5" rx="13.6" ry="5.3" transform="rotate(-46 18.3 208.5)" stroke="#222" fill="none" stroke-width="1.2"/><path d="M41.8,201.5 C43.5,197 51,203.5 55.5,209 C58.5,212.5 62,214.5 63.6,211.5 C65.2,208 63.5,199.2 61.2,199.6 C58.2,200.2 54.5,212.5 50.5,217 C46.5,221.5 40,207 41.8,201.5 Z" stroke="#222" fill="none" stroke-width="1.2"/><path d="M13.3,239 C9,239 8,243 8,244 C8,247 10,247.8 12,247.8 L27.6,247.8" stroke="#222" fill="none" stroke-width="1.2"/><path d="M54.50,238.00 L51.00,243.37 L44.00,243.37 L40.50,238.00 L44.00,232.63 L51.00,232.63 Z" stroke="#222" fill="none" stroke-width="1.2"/><path d="M55.2,245 L66,245 L60.6,236.5 Z" stroke="#222" fill="none" stroke-width="1.2"/><rect x="41.3" y="248.5" width="14" height="7" stroke="#222" fill="none" stroke-width="1.2"/><defs><pattern id="hatch" width="2.6" height="2.6" patternUnits="userSpaceOnUse" patternTransform="rotate(45)"><line x1="0" y1="0" x2="0" y2="2.6" stroke="#777" stroke-width="0.9"/></pattern></defs><path d="M7.5,286.5 L7.5,279 L13,272.5 L28.5,272.5 L28.5,286.5 Z" fill="url(#hatch)" stroke="#222" stroke-width="1.2"/><circle cx="20.5" cy="279.5" r="3" fill="#f2f2f2" stroke="#222" stroke-width="1.1"/><text x="18" y="331.5" text-anchor="middle" font-family="Liberation Serif" font-size="26.5" fill="#111">A</text><path d="M43.5,314.5 v15.5 M61.5,314.5 v15.5 M43.5,316.7 h18" stroke="#111" stroke-width="1.3" fill="none"/><path d="M43.8,316.7 l3.5,-2 v4 Z M61.2,316.7 l-3.5,-2 v4 Z" fill="#111"/><rect x="7" y="348.5" width="22" height="17" fill="#fff" stroke="#111" stroke-width="1.4"/><path d="M9.5,363.5 L9.5,360 L14,356.5 L17,359 L20.5,355 L26.5,360.5 L26.5,363.5 Z" fill="#000"/><circle cx="24.3" cy="352.2" r="1.5" fill="#000"/><path d="M5.5,412.5 L5.5,394 L24,412.5 Z" fill="#fff" stroke="#111" stroke-width="1.3"/><path d="M9.5,408.5 L9.5,402 L16,408.5 Z" fill="none" stroke="#111" stroke-width="1.1"/><path d="M10,389.5 L18.5,397.5 L20.5,395.5 L12,387.5 Z" fill="#e02020" stroke="#801010" stroke-width="0.6"/><path d="M18.5,397.5 L20.5,395.5 L21.5,399 Z" fill="#e8c890"/><path d="M27,387 L23.5,404.5 M27,387 L30,404.5 M27,386 v-1.5" stroke="#111" stroke-width="1.2" fill="none"/><circle cx="27" cy="389" r="1.2" fill="#111"/><rect x="41.5" y="396" width="23" height="8" rx="1" fill="#fff" stroke="#333" stroke-width="1.1"/><line x1="43.5" y1="396.5" x2="43.5" y2="399.3" stroke="#444" stroke-width="0.6"/><line x1="45.3" y1="396.5" x2="45.3" y2="398.1" stroke="#444" stroke-width="0.6"/><line x1="47.1" y1="396.5" x2="47.1" y2="398.1" stroke="#444" stroke-width="0.6"/><line x1="48.9" y1="396.5" x2="48.9" y2="398.1" stroke="#444" stroke-width="0.6"/><line x1="50.7" y1="396.5" x2="50.7" y2="398.1" stroke="#444" stroke-width="0.6"/><line x1="52.5" y1="396.5" x2="52.5" y2="399.3" stroke="#444" stroke-width="0.6"/><line x1="54.3" y1="396.5" x2="54.3" y2="398.1" stroke="#444" stroke-width="0.6"/><line x1="56.1" y1="396.5" x2="56.1" y2="398.1" stroke="#444" stroke-width="0.6"/><line x1="57.9" y1="396.5" x2="57.9" y2="398.1" stroke="#444" stroke-width="0.6"/><line x1="59.7" y1="396.5" x2="59.7" y2="398.1" stroke="#444" stroke-width="0.6"/><line x1="61.5" y1="396.5" x2="61.5" y2="399.3" stroke="#444" stroke-width="0.6"/><line x1="63.3" y1="396.5" x2="63.3" y2="398.1" stroke="#444" stroke-width="0.6"/><rect x="7.5" y="425.5" width="17" height="12" fill="#f1ecd6" stroke="#888" stroke-width="1"/><circle cx="21.5" cy="437" r="7" fill="#efe8cc" fill-opacity="0.85" stroke="#888" stroke-width="1"/><circle cx="7.5" cy="437.5" r="1.3" fill="#f06060"/><line x1="41.5" y1="433.8" x2="59" y2="423.5" stroke="#f02020" stroke-width="1.3"/><path d="M51.30,428.50 L51.30,437.85 L53.50,435.76 L55.15,439.23 L56.58,438.56 L55.04,435.21 L57.90,435.21 Z" fill="#fff" stroke="#1a1a1a" stroke-width="0.9" stroke-linejoin="round"/><path d="M7.5,470.5 L19,466 L28.5,471 L28.5,481.5 L16.5,488 L7.5,482.5 Z M7.5,470.5 L16.5,476 L28.5,471 M16.5,476 L16.5,488" fill="none" stroke="#111" stroke-width="1.2" stroke-linejoin="round"/><circle cx="102" cy="118.7" r="5.6" fill="#f6f6f6" stroke="#2a3a8c" stroke-width="2.3"/><path d="M99,117.5 h6 M101.5,114.5 v7" stroke="#c8a8a8" stroke-width="0.5"/><path d="M99,120.5 l2.5,-3" stroke="#e09090" stroke-width="0.6"/><line x1="102.3" y1="119" x2="106.3" y2="123" stroke="#f4a820" stroke-width="2.3"/><line x1="106" y1="122.7" x2="107.8" y2="124.5" stroke="#e06060" stroke-width="2.3"/><rect x="1133" y="780.5" width="13.5" height="10" fill="#fff" stroke="#222" stroke-width="1"/><rect x="1133" y="780.5" width="13.5" height="2.6" fill="#111"/><circle cx="1164" cy="118.8" r="7" fill="#6f6f6f"/><path d="M1161,115.8 l6,6 M1167,115.8 l-6,6" stroke="#f0f0f0" stroke-width="1.8" stroke-linecap="round"/><circle cx="1182" cy="118.8" r="7" fill="#6f6f6f"/><rect x="1180.3" y="115.3" width="5" height="4" fill="none" stroke="#f0f0f0" stroke-width="1.1"/><rect x="1178.3" y="118" width="5" height="4" fill="#6f6f6f" stroke="#f0f0f0" stroke-width="1.1"/><path d="M1166.5,143.29999999999998 C1168.75,136.45999999999998 1177.75,136.2 1181.5,142.89999999999998 C1178.5,148.67999999999998 1169.5,148.67999999999998 1166.5,143.29999999999998 Z" fill="#000"/><ellipse cx="1174.1" cy="143.6" rx="4.65" ry="3.43" fill="#fff"/><circle cx="1174.2" cy="142.39999999999998" r="2.91" fill="#000"/><path d="M1204.0,143.29999999999998 C1206.25,136.45999999999998 1215.25,136.2 1219.0,142.89999999999998 C1216.0,148.67999999999998 1207.0,148.67999999999998 1204.0,143.29999999999998 Z" fill="#9c9c9c"/><ellipse cx="1211.6" cy="143.6" rx="4.65" ry="3.43" fill="#fff"/><circle cx="1211.7" cy="142.39999999999998" r="2.91" fill="#9c9c9c"/><path d="M1243,141.2 h4.5 v-4.5 h3 v4.5 h4.5 v3 h-4.5 v4.5 h-3 v-4.5 h-4.5 Z" fill="#f00000" stroke="#600000" stroke-width="0.5"/><rect x="1280" y="141.2" width="12" height="3" fill="#f00000" stroke="#600000" stroke-width="0.5"/><path d="M1353.5,149.8 L1356.69,148.48 L1367.35,137.97 L1365.52,136.12 L1354.87,146.63 Z" fill="#e8b040" stroke="#8a5a10" stroke-width="0.6"/><path d="M1367.35,137.97 L1368.91,136.43 L1367.09,134.57 L1365.52,136.12 Z" fill="#e03030"/><rect x="1393.5" y="134.7" width="11" height="14" fill="#eef0f8" stroke="#d8dcea" stroke-width="0.8"/><path d="M1396,137.2 h3 v8.5 l2.5,-2.5 l1,1 l-4,4 l-4,-4 l1,-1 l2.5,2.5 v-6 h-2 Z" fill="#8aa4f0"/><rect x="1430.5" y="137.5" width="10.5" height="10.5" fill="#e86848"/><path d="M1433.2,140.2 l5.2,5.2 M1438.4,140.2 l-5.2,5.2" stroke="#fff" stroke-width="1.2"/><path d="M1161.0,167.1 C1163.25,160.26 1172.25,160.0 1176.0,166.7 C1173.0,172.48 1164.0,172.48 1161.0,167.1 Z" fill="#000"/><ellipse cx="1168.6" cy="167.4" rx="4.65" ry="3.43" fill="#fff"/><circle cx="1168.7" cy="166.2" r="2.91" fill="#000"/><path d="M1161.0,187.1 C1163.25,180.26 1172.25,180.0 1176.0,186.7 C1173.0,192.48 1164.0,192.48 1161.0,187.1 Z" fill="#000"/><ellipse cx="1168.6" cy="187.4" rx="4.65" ry="3.43" fill="#fff"/><circle cx="1168.7" cy="186.2" r="2.91" fill="#000"/><path d="M1161.0,207.1 C1163.25,200.26 1172.25,200.0 1176.0,206.7 C1173.0,212.48 1164.0,212.48 1161.0,207.1 Z" fill="#34404e"/><ellipse cx="1168.6" cy="207.4" rx="4.65" ry="3.43" fill="#d0d4da"/><circle cx="1168.7" cy="206.2" r="2.91" fill="#34404e"/><path d="M1161.0,227.1 C1163.25,220.26 1172.25,220.0 1176.0,226.7 C1173.0,232.48 1164.0,232.48 1161.0,227.1 Z" fill="#000"/><ellipse cx="1168.6" cy="227.4" rx="4.65" ry="3.43" fill="#fff"/><circle cx="1168.7" cy="226.2" r="2.91" fill="#000"/><path d="M1161.0,247.1 C1163.25,240.26 1172.25,240.0 1176.0,246.7 C1173.0,252.48 1164.0,252.48 1161.0,247.1 Z" fill="#000"/><ellipse cx="1168.6" cy="247.4" rx="4.65" ry="3.43" fill="#fff"/><circle cx="1168.7" cy="246.2" r="2.91" fill="#000"/><path d="M1161.0,267.1 C1163.25,260.26 1172.25,260.0 1176.0,266.7 C1173.0,272.48 1164.0,272.48 1161.0,267.1 Z" fill="#000"/><ellipse cx="1168.6" cy="267.4" rx="4.65" ry="3.43" fill="#fff"/><circle cx="1168.7" cy="266.2" r="2.91" fill="#000"/><circle cx="1164" cy="319.0" r="7" fill="#6f6f6f"/><path d="M1161,316.0 l6,6 M1167,316.0 l-6,6" stroke="#f0f0f0" stroke-width="1.8" stroke-linecap="round"/><circle cx="1182" cy="319.0" r="7" fill="#6f6f6f"/><rect x="1180.3" y="315.5" width="5" height="4" fill="none" stroke="#f0f0f0" stroke-width="1.1"/><rect x="1178.3" y="318.2" width="5" height="4" fill="#6f6f6f" stroke="#f0f0f0" stroke-width="1.1"/><path d="M1177.0,344.1 C1179.25,337.26 1188.25,337.0 1192.0,343.7 C1189.0,349.48 1180.0,349.48 1177.0,344.1 Z" fill="#000"/><ellipse cx="1184.6" cy="344.4" rx="4.65" ry="3.43" fill="#fff"/><circle cx="1184.7" cy="343.2" r="2.91" fill="#000"/><path d="M1237.0,344.1 C1239.25,337.26 1248.25,337.0 1252.0,343.7 C1249.0,349.48 1240.0,349.48 1237.0,344.1 Z" fill="#9c9c9c"/><ellipse cx="1244.6" cy="344.4" rx="4.65" ry="3.43" fill="#fff"/><circle cx="1244.7" cy="343.2" r="2.91" fill="#9c9c9c"/><path d="M1298.5,341.9 h4.5 v-4.5 h3 v4.5 h4.5 v3 h-4.5 v4.5 h-3 v-4.5 h-4.5 Z" fill="#f00000" stroke="#600000" stroke-width="0.5"/><rect x="1359" y="341.9" width="12" height="3" fill="#f00000" stroke="#600000" stroke-width="0.5"/><path d="M1418,350.5 L1421.21,349.21 L1431.82,338.96 L1430.01,337.09 L1419.40,347.34 Z" fill="#e8b040" stroke="#8a5a10" stroke-width="0.6"/><path d="M1431.82,338.96 L1433.40,337.44 L1431.60,335.56 L1430.01,337.09 Z" fill="#e03030"/><rect x="1161.5" y="364.5" width="15" height="8" fill="#ffffff" stroke="#000" stroke-width="1"/><path d="M1415.5,368.6 C1417.75,361.76 1426.75,361.5 1430.5,368.2 C1427.5,373.98 1418.5,373.98 1415.5,368.6 Z" fill="#000"/><ellipse cx="1423.1" cy="368.9" rx="4.65" ry="3.43" fill="#fff"/><circle cx="1423.2" cy="367.7" r="2.91" fill="#000"/><path d="M1441.5,368.5 v-2.5 a3.8,3.8 0 0 1 7.6,0 v2.5" fill="none" stroke="#c2c2c2" stroke-width="1.4"/><rect x="1440" y="367.7" width="10.6" height="7" fill="#c2c2c2"/><rect x="1161.5" y="384.5" width="15" height="8" fill="#c0c0c0" stroke="#000" stroke-width="1"/><path d="M1415.5,388.6 C1417.75,381.76 1426.75,381.5 1430.5,388.2 C1427.5,393.98 1418.5,393.98 1415.5,388.6 Z" fill="#000"/><ellipse cx="1423.1" cy="388.9" rx="4.65" ry="3.43" fill="#fff"/><circle cx="1423.2" cy="387.7" r="2.91" fill="#000"/><path d="M1441.5,388.5 v-2.5 a3.8,3.8 0 0 1 7.6,0 v2.5" fill="none" stroke="#c2c2c2" stroke-width="1.4"/><rect x="1440" y="387.7" width="10.6" height="7" fill="#c2c2c2"/><rect x="1161.5" y="404.5" width="15" height="8" fill="#c2b08a" stroke="#000" stroke-width="1"/><path d="M1415.5,408.6 C1417.75,401.76 1426.75,401.5 1430.5,408.2 C1427.5,413.98 1418.5,413.98 1415.5,408.6 Z" fill="#1c2a5e"/><ellipse cx="1423.1" cy="408.9" rx="4.65" ry="3.43" fill="#0b4fd5"/><circle cx="1423.2" cy="407.7" r="2.91" fill="#1c2a5e"/><path d="M1441.5,408.5 v-2.5 a3.8,3.8 0 0 1 7.6,0 v2.5" fill="none" stroke="#b8c4dc" stroke-width="1.4"/><rect x="1440" y="407.7" width="10.6" height="7" fill="#b8c4dc"/><rect x="1161.5" y="424.5" width="15" height="8" fill="#5e9a32" stroke="#000" stroke-width="1"/><path d="M1415.5,428.6 C1417.75,421.76 1426.75,421.5 1430.5,428.2 C1427.5,433.98 1418.5,433.98 1415.5,428.6 Z" fill="#000"/><ellipse cx="1423.1" cy="428.9" rx="4.65" ry="3.43" fill="#fff"/><circle cx="1423.2" cy="427.7" r="2.91" fill="#000"/><path d="M1441.5,428.5 v-2.5 a3.8,3.8 0 0 1 7.6,0 v2.5" fill="none" stroke="#c2c2c2" stroke-width="1.4"/><rect x="1440" y="427.7" width="10.6" height="7" fill="#c2c2c2"/><path d="M1395.5,413.3 L1398.71,412.02 L1406.81,404.26 L1405.01,402.38 L1396.91,410.15 Z" fill="#d8b070" stroke="#8a5a10" stroke-width="0.6"/><path d="M1406.81,404.26 L1408.40,402.74 L1406.60,400.86 L1405.01,402.38 Z" fill="#e03030"/><rect x="1462" y="116" width="2" height="2" fill="#a6a6a6"/><rect x="1468" y="116" width="2" height="2" fill="#a6a6a6"/><rect x="1474" y="116" width="2" height="2" fill="#a6a6a6"/><rect x="1480" y="116" width="2" height="2" fill="#a6a6a6"/><rect x="1486" y="116" width="2" height="2" fill="#a6a6a6"/><rect x="1456" y="120.4" width="43.3" height="42.19999999999999" rx="5" fill="#b4b4b4"/><rect x="1456" y="167.8" width="43.3" height="41.69999999999999" rx="5" fill="#b4b4b4"/><rect x="1456" y="418" width="43.3" height="42.5" rx="5" fill="#b4b4b4"/><rect x="1458" y="262" width="1.1" height="1.1" fill="#555"/><rect x="1461" y="262" width="1.1" height="1.1" fill="#555"/><rect x="1464" y="262" width="1.1" height="1.1" fill="#555"/><rect x="1467" y="262" width="1.1" height="1.1" fill="#555"/><rect x="1470" y="262" width="1.1" height="1.1" fill="#555"/><rect x="1473" y="262" width="1.1" height="1.1" fill="#555"/><rect x="1476" y="262" width="1.1" height="1.1" fill="#555"/><rect x="1479" y="262" width="1.1" height="1.1" fill="#555"/><rect x="1482" y="262" width="1.1" height="1.1" fill="#555"/><rect x="1485" y="262" width="1.1" height="1.1" fill="#555"/><rect x="1488" y="262" width="1.1" height="1.1" fill="#555"/><rect x="1491" y="262" width="1.1" height="1.1" fill="#555"/><rect x="1494" y="262" width="1.1" height="1.1" fill="#555"/><rect x="1497" y="262" width="1.1" height="1.1" fill="#555"/><rect x="1500" y="262" width="1.1" height="1.1" fill="#555"/><rect x="1458" y="410" width="1.1" height="1.1" fill="#555"/><rect x="1461" y="410" width="1.1" height="1.1" fill="#555"/><rect x="1464" y="410" width="1.1" height="1.1" fill="#555"/><rect x="1467" y="410" width="1.1" height="1.1" fill="#555"/><rect x="1470" y="410" width="1.1" height="1.1" fill="#555"/><rect x="1473" y="410" width="1.1" height="1.1" fill="#555"/><rect x="1476" y="410" width="1.1" height="1.1" fill="#555"/><rect x="1479" y="410" width="1.1" height="1.1" fill="#555"/><rect x="1482" y="410" width="1.1" height="1.1" fill="#555"/><rect x="1485" y="410" width="1.1" height="1.1" fill="#555"/><rect x="1488" y="410" width="1.1" height="1.1" fill="#555"/><rect x="1491" y="410" width="1.1" height="1.1" fill="#555"/><rect x="1494" y="410" width="1.1" height="1.1" fill="#555"/><rect x="1497" y="410" width="1.1" height="1.1" fill="#555"/><rect x="1500" y="410" width="1.1" height="1.1" fill="#555"/><rect x="1463.5" y="127" width="27.5" height="27.5" fill="#fff" stroke="#222" stroke-width="1"/><rect x="1463.5" y="127" width="27.5" height="5" fill="#000"/><rect x="1465" y="128.2" width="3" height="3" fill="#fff"/><rect x="1463.5" y="174.2" width="27.5" height="27.5" fill="#fff" stroke="#222" stroke-width="1"/><rect x="1463.5" y="174.2" width="27.5" height="5" fill="#000"/><rect x="1465" y="175.39999999999998" width="3" height="3" fill="#fff"/><rect x="1463.5" y="221" width="27.5" height="27.5" fill="#fff" stroke="#222" stroke-width="1"/><rect x="1463.5" y="221" width="27.5" height="5" fill="#000"/><rect x="1465" y="222.2" width="3" height="3" fill="#fff"/><rect x="1463.5" y="276.8" width="27.5" height="27.5" fill="#fff" stroke="#222" stroke-width="1"/><rect x="1463.5" y="276.8" width="27.5" height="5" fill="#000"/><rect x="1465" y="278.0" width="3" height="3" fill="#fff"/><rect x="1463.5" y="323" width="27.5" height="27.5" fill="#fff" stroke="#222" stroke-width="1"/><rect x="1463.5" y="323" width="27.5" height="5" fill="#000"/><rect x="1465" y="324.2" width="3" height="3" fill="#fff"/><rect x="1463.5" y="369" width="27.5" height="27.5" fill="#fff" stroke="#222" stroke-width="1"/><rect x="1463.5" y="369" width="27.5" height="5" fill="#000"/><rect x="1465" y="370.2" width="3" height="3" fill="#fff"/><rect x="1463.5" y="425" width="27.5" height="27.5" fill="#fff" stroke="#222" stroke-width="1"/><rect x="1463.5" y="425" width="27.5" height="5" fill="#000"/><rect x="1465" y="426.2" width="3" height="3" fill="#fff"/><rect x="1463.5" y="471.6" width="27.5" height="27.5" fill="#fff" stroke="#222" stroke-width="1"/><rect x="1463.5" y="471.6" width="27.5" height="5" fill="#000"/><rect x="1465" y="472.8" width="3" height="3" fill="#fff"/><path d="M1470.5,138 l5,-2 v11 l-5,2 Z" fill="#a0a0a0" stroke="#333" stroke-width="0.6"/><path d="M1473.5,138 l10,-4 v11 l-10,4 Z" fill="#fff" stroke="#333" stroke-width="0.8"/><path d="M1477,145 l4,-7 l1,6 Z" fill="none" stroke="#e03030" stroke-width="0.8"/><rect x="1469" y="184.2" width="11" height="8" fill="#efe8c0" stroke="#777" stroke-width="0.8"/><circle cx="1480.5" cy="192.7" r="4.5" fill="#efe8c0" fill-opacity="0.8" stroke="#777" stroke-width="0.8"/><rect x="1468.5" y="231" width="17.5" height="11" rx="2" fill="#f0f0f0" stroke="#b4c4e4" stroke-width="0.8"/><rect x="1467" y="286.8" width="3.5" height="3" fill="#000"/><rect x="1473" y="286.8" width="14" height="3" fill="none" stroke="#444" stroke-width="0.7"/><rect x="1467" y="292.3" width="3.5" height="3" fill="#000"/><rect x="1473" y="292.3" width="14" height="3" fill="none" stroke="#444" stroke-width="0.7"/><rect x="1467" y="297.8" width="3.5" height="3" fill="#000"/><rect x="1473" y="297.8" width="14" height="3" fill="none" stroke="#444" stroke-width="0.7"/><path d="M1468.5,332 h18 l-6.5,7 v8 h-4.5 v-8 Z" fill="#e4e4e4" stroke="#444" stroke-width="0.9"/><path d="M1469,378 l6,4 v8 l-6,4 Z" fill="#f4f4f4" stroke="#333" stroke-width="0.8"/><rect x="1475" y="381.5" width="10" height="9" fill="#bbb" stroke="#555" stroke-width="0.7"/><line x1="1467" y1="386" x2="1489" y2="386" stroke="#f08080" stroke-width="0.6" stroke-dasharray="1.5 1"/><rect x="1466.5" y="433.0" width="12" height="0.8" fill="#888"/><rect x="1466.5" y="436.2" width="14" height="0.8" fill="#888"/><rect x="1466.5" y="439.4" width="12" height="0.8" fill="#888"/><rect x="1466.5" y="442.6" width="14" height="0.8" fill="#888"/><line x1="1464" y1="448" x2="1491" y2="448" stroke="#555" stroke-width="0.6"/><rect x="1474" y="449.2" width="14" height="1" fill="#777"/><rect x="1470.5" y="481.6" width="13.5" height="15" rx="1" fill="#c28a2a"/><rect x="1472" y="483.1" width="10.5" height="12" fill="#fafafa"/><rect x="1474" y="480.1" width="6.5" height="3.5" fill="#888"/><circle cx="509.5" cy="822" r="2.6" fill="#c2c2c2"/><circle cx="942.5" cy="822" r="2.6" fill="#c2c2c2"/><circle cx="1272.5" cy="822" r="2.6" fill="#c2c2c2"/><path d="M717,815.5 C717,808.5 721,806.2 726,806.2 C731,806.2 735,808.5 735,815.5 L735,826 C735,832 731,835.3 726,835.3 C721,835.3 717,832 717,826 Z" fill="#fff" stroke="#333" stroke-width="0.9"/><path d="M717,819.5 h18 M726,806.5 v13" stroke="#333" stroke-width="0.8"/><rect x="724.5" y="808.5" width="3" height="6" rx="1.5" fill="none" stroke="#333" stroke-width="0.8"/><path d="M1185,213.5 L1188.20,212.19 L1197.33,203.27 L1195.52,201.41 L1186.38,210.33 Z" fill="#e0b868" stroke="#8a5a10" stroke-width="0.6"/><path d="M1197.33,203.27 L1198.91,201.73 L1197.09,199.87 L1195.52,201.41 Z" fill="#e86060"/><circle cx="1187" cy="205" r="38.6" fill="none" stroke="#c9d5e1" stroke-width="1.4" opacity="0.8"/><circle cx="1187" cy="205" r="36.3" fill="none" stroke="#b2c3d4" stroke-width="3.4" opacity="0.85"/><circle cx="1187" cy="205" r="33.6" fill="none" stroke="#dde6ee" stroke-width="1.6" opacity="0.8"/></svg>
<svg class="a" style="left:0;top:0" width="1500" height="844" viewBox="0 0 1500 844"><path d="M1187.00,205.00 L1187.00,227.44 L1192.28,222.42 L1196.24,230.74 L1199.67,229.16 L1195.98,221.10 L1202.84,221.10 Z" fill="#fff" stroke="#1a1a1a" stroke-width="1.2" stroke-linejoin="round"/></svg>
</body></html>
